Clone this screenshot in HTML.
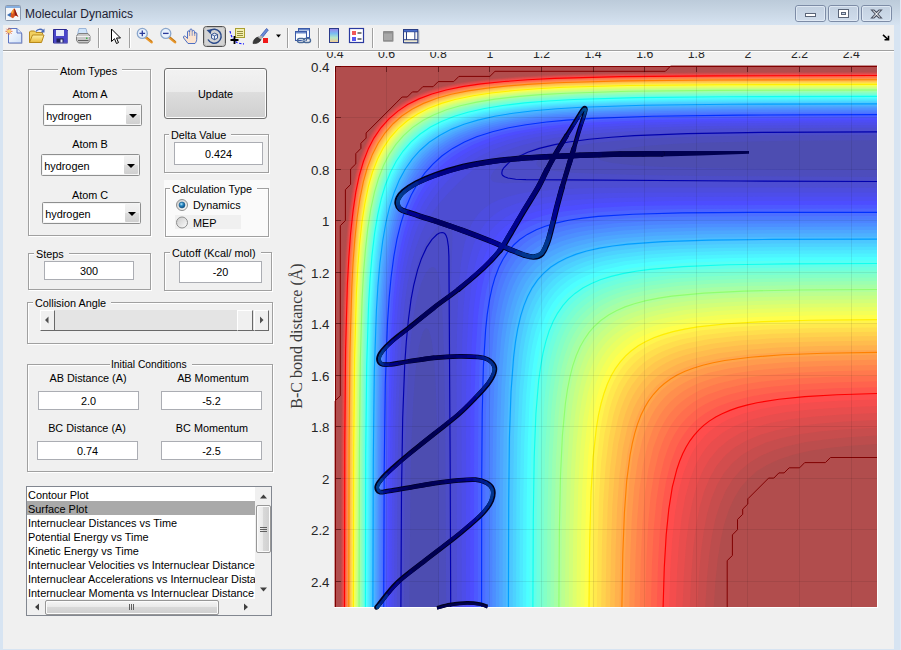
<!DOCTYPE html>
<html><head><meta charset="utf-8"><title>Molecular Dynamics</title>
<style>
*{box-sizing:border-box;margin:0;padding:0}
html,body{width:901px;height:650px;overflow:hidden;background:#d7e4f2}
body{position:relative;font-family:"Liberation Sans",sans-serif;font-size:10.85px;color:#000}
.abs{position:absolute}
#titlebar{position:absolute;left:0;top:0;width:901px;height:26px;background:linear-gradient(#bccbda 0,#c8d6e4 45%,#d7e4f2 100%)}
#title{position:absolute;left:25px;top:6.5px;font-size:12px;color:#222233;white-space:nowrap;letter-spacing:0}
#client{position:absolute;left:3px;top:25px;width:891px;height:624px;background:#f0f0f0}
#tbline{position:absolute;left:3px;top:50px;width:891px;height:1px;background:#a0a0a0}
.cap{position:absolute;top:6px;height:15px;border:1px solid #7c8ba3;border-radius:3px;background:linear-gradient(#dbe6f4,#c3d3e8 50%,#b7c9e2 51%,#cfdcee);box-shadow:inset 0 0 0 1px rgba(255,255,255,.55)}
.panel{position:absolute;border:1px solid #a0a0a0;box-shadow:1px 1px 0 #fff, inset 1px 1px 0 #fff}
.ptitle{position:absolute;top:-6px;background:#f0f0f0;padding:0 5px 0 2px;white-space:nowrap;line-height:12px;height:12px}
.lbl{position:absolute;white-space:nowrap;line-height:12px;height:12px;text-align:center}
.edit{position:absolute;background:#fff;border:1px solid #abadb3;text-align:center;white-space:nowrap}
.combo{position:absolute;background:#fff;border:1px solid #8e8f8f;border-radius:1.5px;box-shadow:inset 0 0 0 1px #f4f4f4}
.combo span{position:absolute;left:2.2px;top:5px;font-size:10.9px;line-height:13px}
.combo i{position:absolute;right:1px;top:1px;bottom:1px;width:14px;background:linear-gradient(#f2f2f2,#ebebeb 49%,#dddddd 50%,#cfcfcf);border-radius:1px}
.combo i:after{content:"";position:absolute;left:3px;top:8px;border:4px solid transparent;border-top:4px solid #000;border-bottom:0}
.sb{background:#f0f0f0;border-top:1px solid #fff;border-left:1px solid #fff;border-right:1px solid #696969;border-bottom:1px solid #696969}
#list div{height:14px;line-height:16px;padding-left:1px;white-space:nowrap;overflow:hidden;font-size:10.92px}
.xt .tk{font-size:12.3px}
.tk{font-size:13.33px;color:#262626;line-height:14px;height:14px;white-space:nowrap}
</style></head><body>
<div id="titlebar"></div>
<div id="title">Molecular Dynamics</div>

<div class="abs" style="left:900px;top:0;width:1px;height:650px;background:#e0e9f5"></div>
<div id="client"></div>
<div id="tbline"></div><div class="abs" style="left:3px;top:51px;width:891px;height:1px;background:#fff"></div>
<svg class="abs" style="left:0;top:0" width="901" height="51" viewBox="0 0 901 51">
<defs>
<linearGradient id="pg" x1="0" y1="0" x2="1" y2="1"><stop offset="0" stop-color="#ffffff"/><stop offset="1" stop-color="#cfe0f7"/></linearGradient>
<linearGradient id="fg" x1="0" y1="0" x2="0" y2="1"><stop offset="0" stop-color="#fff3a8"/><stop offset="1" stop-color="#e8b93a"/></linearGradient>
<linearGradient id="cbg" x1="0" y1="0" x2="0" y2="1"><stop offset="0" stop-color="#9a80e6"/><stop offset=".35" stop-color="#78bcf2"/><stop offset=".65" stop-color="#b4e6c8"/><stop offset="1" stop-color="#f8c890"/></linearGradient>
<linearGradient id="capg" x1="0" y1="0" x2="0" y2="1"><stop offset="0" stop-color="#c2d0e0"/><stop offset="1" stop-color="#d0ddec"/></linearGradient>
</defs>
<!-- matlab logo -->
<rect x="5.500" y="5.500" width="15" height="15" rx="1" fill="#f4f6f9" stroke="#8c9bb0"/>
<rect x="6" y="6" width="14" height="2" fill="#86aede"/>
<path d="M7 15l4-2.500 2 1.500-2.500 3z" fill="#3a6fb5"/><path d="M11 12.500c1.500-1.500 2.200-4 3.200-4s2 5 4.300 8.500c-1.500-.8-2.500-2-3.500-1l-2 2.200-2.500-1.200z" fill="#d8541e"/><path d="M14.200 8.500c1 0 2 5 4.300 8.500-1.500-.8-2.500-2-3.500-1z" fill="#8e1b12"/><path d="M11 12.500c1.500-1.500 2.200-4 3.200-4-.5 1.500-.7 4-1.200 5.500z" fill="#f2a23a"/>
<!-- caption buttons -->
<g stroke="#7d8ca6" fill="url(#capg)"><rect x="795.500" y="5.500" width="30" height="16" rx="2.500"/><rect x="828.500" y="5.500" width="30" height="16" rx="2.500"/><rect x="861.500" y="5.500" width="30" height="16" rx="2.500"/></g>
<g stroke="#e4ecf6" fill="none" stroke-opacity=".8"><rect x="796.500" y="6.500" width="28" height="14" rx="1.500"/><rect x="829.500" y="6.500" width="28" height="14" rx="1.500"/><rect x="862.500" y="6.500" width="28" height="14" rx="1.500"/></g>
<rect x="805.500" y="13.500" width="10" height="3" fill="#fff" stroke="#5a6578"/>
<rect x="838.500" y="9.500" width="10" height="8" fill="#fff" stroke="#5a6578"/><rect x="841.500" y="12.500" width="4" height="2" fill="#c4d3e8" stroke="#5a6578"/>
<path d="M871.500 10l2.500 0 2.500 2.500 2.500-2.500 2.500 0-3.700 4 3.700 4-2.500 0-2.500-2.500-2.500 2.500-2.500 0 3.700-4z" fill="#fff" stroke="#4a5060" stroke-width="1.1"/>
<!-- new -->
<path d="M8.500 28.500h8.500l4.500 4.500v10h-13z" fill="url(#pg)" stroke="#5b74c4"/><path d="M17 28.500v4.500h4.500" fill="#dfe9fa" stroke="#5b74c4"/><path d="M9.500 43.500h12.500v-10" fill="none" stroke="#9aa4c8"/>
<path d="M9 27.800v7M5.500 31.300h7M6.500 28.800l5 5M11.500 28.800l-5 5" stroke="#e8612c" stroke-width=".9"/><circle cx="9" cy="31.300" r="1.700" fill="#fbd36a"/>
<!-- open -->
<path d="M29.500 42.500v-10.500l1-1h4l1.500 1.500h6.500v2" fill="#f2d060" stroke="#b8891a"/><path d="M29.500 42.500l3-7.500h11.500l-2.500 7.500z" fill="url(#fg)" stroke="#b8891a"/><path d="M36 31.500c1.500-2.500 5-3 7-1" fill="none" stroke="#4a6ab8" stroke-width="1.300"/><path d="M44.500 28.500v4h-4z" fill="#4a6ab8"/>
<!-- save -->
<path d="M53.500 29.500h13l1 1v12.500h-14z" fill="#4a46c8" stroke="#2a2890"/><rect x="56" y="30" width="8" height="6" fill="#e8ecf8"/><rect x="56.500" y="38.500" width="7" height="4.500" fill="#20205a"/><rect x="60.500" y="39.500" width="2" height="3" fill="#e8ecf8"/><path d="M67.500 31v12h-13.500" fill="none" stroke="#8a88d8" stroke-opacity=".6"/>
<!-- print -->
<path d="M79 28.500h7l1.500 6h-10z" fill="#cfe4fa" stroke="#8aa8d0" stroke-width=".8"/><path d="M76.500 36l2-2.500h9.500l2 2.500v4.500l-2 2.500h-9.500l-2-2.500z" fill="#c8c8c8" stroke="#808080"/><path d="M76.500 36.500h13.500" stroke="#f0f0f0"/><path d="M78 40.500h10.500" stroke="#606060"/><path d="M78.500 42.500h9.500" stroke="#909090"/><rect x="86" y="37.500" width="1.500" height="1.500" fill="#3cb44a"/>
<!-- separators -->
<path d="M98.500 28v20M129.500 28v20M287.500 28v20M318.500 28v20M372.500 28v20" stroke="#a0a0a0"/><path d="M99.500 28v20M130.500 28v20M288.500 28v20M319.500 28v20M373.500 28v20" stroke="#ffffff"/>
<!-- cursor -->
<path d="M111.500 29v12.500l3-2.800 2 4.800 2-.9-2-4.600h4z" fill="#fff" stroke="#000" stroke-linejoin="round"/>
<!-- zoom in -->
<path d="M146 37.500l5.500 4.500" stroke="#e8962a" stroke-width="2.800" stroke-linecap="round"/><path d="M146.500 37l5.500 4.500" stroke="#a86a18" stroke-width=".7"/>
<circle cx="142.300" cy="33.400" r="5" fill="#e8f1fc" stroke="#8aa6cc" stroke-width="1.300"/><path d="M139.500 33.400h5.600M142.300 30.600v5.600" stroke="#2a3a9a" stroke-width="1.300"/>
<!-- zoom out -->
<path d="M169.500 37.500l5.500 4.500" stroke="#e8962a" stroke-width="2.800" stroke-linecap="round"/><path d="M170 37l5.500 4.500" stroke="#a86a18" stroke-width=".7"/>
<circle cx="165.800" cy="33.400" r="5" fill="#e8f1fc" stroke="#8aa6cc" stroke-width="1.300"/><path d="M163 33.400h5.600" stroke="#2a3a9a" stroke-width="1.300"/>
<!-- hand -->
<path d="M188 43.500l-4.300-5.500c-1-1.500.7-2.700 1.900-1.500l1.900 2v-6.500c0-1.500 2-1.500 2.100 0l.3-2c.2-1.500 2.200-1.400 2.200.1l.2 1.300c.3-1.400 2.300-1.200 2.300.3l.1 1.700c.4-1.300 2.200-1 2.200.4l-.2 5.700c-.1 2-1 3-1.700 4z" fill="#fbe3cf" stroke="#3a62c0" stroke-width=".9" stroke-linejoin="round"/><path d="M189.600 32v4M192.200 31.500v4.300M194.700 32.500v3.500" stroke="#3a62c0" stroke-width=".6"/>
<!-- rotate (pressed) -->
<rect x="203.500" y="26.500" width="22" height="20" rx="3" fill="#d4d4d4" stroke="#505050"/><rect x="204.500" y="27.500" width="20" height="18" rx="2" fill="none" stroke="#bdbdbd"/>
<path d="M209.500 31a7 7 0 1 1 -1.500 8.500" fill="none" stroke="#2a4a8a" stroke-width="1.500"/><path d="M206.500 30l5.200-.8-1 5z" fill="#2a4a8a"/>
<path d="M211.500 34.500l3-1.300 3 1.300v3.700l-3 1.500-3-1.500z" fill="#e8eef8" stroke="#2a4a8a" stroke-width=".9"/><path d="M211.500 34.500l3 1.400 3-1.400M214.500 35.900v3.800" fill="none" stroke="#2a4a8a" stroke-width=".8"/>
<!-- data cursor -->
<rect x="235.500" y="28.500" width="9" height="9" fill="#f3efb0" stroke="#a8a030"/><path d="M237 31.500h6M237 33.500h6M237 35.500h6" stroke="#807820" stroke-width=".8"/>
<path d="M230 31c1 5 3 9 7 11.500 2 1 4 1.300 7 1.300" fill="none" stroke="#1a1aff" stroke-width="1.200" stroke-dasharray="2.500 1.500"/>
<path d="M234.500 36v8M230.500 40h8" stroke="#000" stroke-width="1.800"/>
<!-- brush -->
<path d="M260 36.500l6.500-8 1.800 1.500-6.300 8z" fill="#6a8ad8" stroke="#3a5ab0" stroke-width=".8"/><path d="M253 43.500c0-3 2-6 5.500-6.500l2.500 2c-.5 3-4 5-8 4.500z" fill="#3a3a3a" stroke="#202020" stroke-width=".6"/><path d="M258 37.500l3-2 2 1.600-2 2.400z" fill="#b0b0b0"/>
<rect x="263" y="38" width="5" height="5" fill="#f01818"/>
<path d="M276 34.500h5l-2.500 3z" fill="#000"/>
<!-- link -->
<rect x="298.500" y="28.500" width="11" height="9" fill="#f4f8ff" stroke="#3a5aa8"/><rect x="299" y="29" width="10" height="1.500" fill="#6a88c8"/>
<rect x="295.500" y="31.500" width="11" height="9" fill="#fafcff" stroke="#3a5aa8"/><rect x="296" y="32" width="10" height="1.500" fill="#6a88c8"/>
<rect x="297.500" y="38.500" width="7" height="4" rx="2" fill="none" stroke="#4a6a98" stroke-width="1.400"/><rect x="303.500" y="38.500" width="7" height="4" rx="2" fill="none" stroke="#4a6a98" stroke-width="1.400"/><path d="M301.500 40.500h5" stroke="#8aa0c0" stroke-width="1.200"/>
<!-- colorbar -->
<rect x="329.500" y="28.500" width="9" height="14" fill="url(#cbg)" stroke="#2a3a8a"/>
<!-- legend -->
<rect x="349.500" y="28.500" width="14" height="14" fill="#fff" stroke="#2a3aa0" stroke-width="1.200"/><rect x="352" y="31" width="4" height="4" fill="#f05858"/><rect x="352" y="37" width="4" height="4" fill="#5858f0"/><path d="M357.500 33h4M357.500 39h4" stroke="#000" stroke-width="1.200"/>
<!-- gray square -->
<rect x="383" y="31" width="10.500" height="10.800" rx=".8" fill="#8e8e8e"/><rect x="384" y="33.500" width="8" height="6.500" fill="#a8a8a8"/>
<!-- plot tools -->
<rect x="404.500" y="30.500" width="15" height="13.500" fill="#9aa0a8" opacity=".6"/>
<rect x="403" y="29" width="15.300" height="14.200" fill="#2a3f85"/><rect x="404" y="30" width="13.300" height="1.600" fill="#4a6cc8"/>
<rect x="407" y="32.200" width="7.300" height="7" fill="#fff"/><rect x="404" y="32.200" width="2" height="7" fill="#f4f4f4"/><rect x="415.300" y="32.200" width="2" height="7" fill="#f4f4f4"/>
<rect x="404" y="40.200" width="13.300" height="2" fill="#ece8d0"/>
<!-- dock arrow -->
<path d="M883 34.800l4.500 4.200M884.500 39.700h4v-4" fill="none" stroke="#000" stroke-width="1.600"/>
</svg>

<!-- Atom Types -->
<div class="panel" style="left:28px;top:69px;width:123px;height:167px"><div class="ptitle" style="left:29px;top:-5px">Atom Types</div></div>
<div class="lbl" style="left:40px;top:88px;width:100px">Atom A</div>
<div class="combo" style="left:43px;top:104px;width:99px;height:22px"><span>hydrogen</span><i></i></div>
<div class="lbl" style="left:40px;top:138px;width:100px">Atom B</div>
<div class="combo" style="left:41px;top:154px;width:99px;height:22px"><span>hydrogen</span><i></i></div>
<div class="lbl" style="left:40px;top:189px;width:100px">Atom C</div>
<div class="combo" style="left:42px;top:202px;width:99px;height:22px"><span>hydrogen</span><i></i></div>
<!-- Update -->
<div class="abs" style="left:164px;top:68px;width:103px;height:51px;border:1px solid #707070;border-radius:3px;background:linear-gradient(#f2f2f2,#ebebeb 47%,#dddddd 48%,#cfcfcf);box-shadow:inset 0 0 0 1px #fcfcfc"><div class="lbl" style="left:0;right:0;top:19px">Update</div></div>
<!-- Delta -->
<div class="panel" style="left:164px;top:134px;width:105px;height:39px"><div class="ptitle" style="left:4px">Delta Value</div></div>
<div class="edit" style="left:174px;top:142px;width:89px;height:23px;line-height:23px">0.424</div>
<!-- Calc type -->
<div class="abs" style="left:164px;top:180px;width:106px;height:58px;background:#fafafa"></div>
<div class="panel" style="left:165px;top:188px;width:104px;height:49px"><div class="ptitle" style="left:4px;background:#fafafa">Calculation Type</div></div>
<div class="abs" style="left:175px;top:215px;width:66px;height:14px;background:#f0f0f0"></div>
<svg class="abs" style="left:175px;top:198px" width="14" height="32" viewBox="0 0 14 32">
<defs><radialGradient id="rg" cx="40%" cy="35%" r="60%"><stop offset="0" stop-color="#bfe6f7"/><stop offset=".45" stop-color="#2f8fc8"/><stop offset="1" stop-color="#0b4f86"/></radialGradient>
<linearGradient id="rbg" x1="0" y1="0" x2="1" y2="1"><stop offset="0" stop-color="#c8c8c8"/><stop offset="1" stop-color="#fdfdfd"/></linearGradient></defs>
<circle cx="7" cy="7" r="5.5" fill="url(#rbg)" stroke="#8e8f8f"/><circle cx="7" cy="7" r="3" fill="url(#rg)" stroke="#1f5f8f" stroke-width=".6"/>
<circle cx="7" cy="24.5" r="5.5" fill="url(#rbg)" stroke="#8e8f8f"/>
</svg>
<div class="lbl" style="left:193px;top:199px;text-align:left">Dynamics</div>
<div class="lbl" style="left:193px;top:217px;text-align:left">MEP</div>
<!-- Steps -->
<div class="panel" style="left:28px;top:253px;width:123px;height:37px"><div class="ptitle" style="left:5px">Steps</div></div>
<div class="edit" style="left:44px;top:261px;width:90px;height:19px;line-height:19px">300</div>
<!-- Cutoff -->
<div class="panel" style="left:164px;top:252px;width:108px;height:39px"><div class="ptitle" style="left:5px">Cutoff (Kcal/ mol)</div></div>
<div class="edit" style="left:179px;top:261px;width:83px;height:22px;line-height:20.5px">-20</div>
<!-- Collision angle -->
<div class="panel" style="left:27px;top:302px;width:246px;height:42px"><div class="ptitle" style="left:5px">Collision Angle</div></div>
<div class="abs" style="left:40px;top:310px;width:229px;height:21px;background:#e4e4e4;border-bottom:1px solid #696969"></div>
<div class="abs sb" style="left:40px;top:310px;width:15px;height:21px"></div>
<div class="abs sb" style="left:237px;top:310px;width:16px;height:21px"></div>
<div class="abs sb" style="left:254px;top:310px;width:15px;height:21px"></div>
<svg class="abs" style="left:40px;top:310px" width="231" height="21"><path d="M8.500 6.500v7l-3.500-3.500z M220 6.500v7l3.500-3.500z" fill="#505050"/></svg>
<!-- Initial Conditions -->
<div class="panel" style="left:27px;top:364px;width:246px;height:108px"><div class="ptitle" style="left:82px;top:-6px;font-size:10.3px;padding:0 5px 0 1px">Initial Conditions</div></div>
<div class="lbl" style="left:33px;top:372px;width:110px">AB Distance (A)</div>
<div class="lbl" style="left:158px;top:372px;width:110px">AB Momentum</div>
<div class="edit" style="left:38px;top:391px;width:101px;height:19px;line-height:19px">2.0</div>
<div class="edit" style="left:161px;top:391px;width:101px;height:19px;line-height:19px">-5.2</div>
<div class="lbl" style="left:32px;top:422px;width:110px">BC Distance (A)</div>
<div class="lbl" style="left:157px;top:422px;width:110px">BC Momentum</div>
<div class="edit" style="left:37px;top:441px;width:101px;height:19px;line-height:19px">0.74</div>
<div class="edit" style="left:161px;top:441px;width:101px;height:19px;line-height:19px">-2.5</div>
<!-- Listbox -->
<div id="list" class="abs" style="left:26px;top:486px;width:246px;height:130px;background:#fff;border:1px solid #828790;overflow:hidden">
<div class="abs" style="left:0px;top:14px;width:228px;height:14px;background:#a9a9a9"></div>
<div style="margin-top:0px;position:relative;width:228px">Contour Plot</div><div style="position:relative;width:228px">Surface Plot</div><div style="width:228px">Internuclear Distances vs Time</div><div style="width:228px">Potential Energy vs Time</div><div style="width:228px">Kinetic Energy vs Time</div><div style="width:228px">Internuclear Velocities vs Internuclear Distance</div><div style="width:228px">Internuclear Accelerations vs Internuclear Distance</div><div style="width:228px">Internuclear Momenta vs Internuclear Distance</div>
<div class="abs" style="left:228px;top:0;width:17px;height:112px;background:#f0f0f0"></div>
<div class="abs" style="left:0;top:112px;width:245px;height:17px;background:#f0f0f0"></div>
<div class="abs" style="left:229px;top:18px;width:15px;height:48px;border:1px solid #979797;border-radius:2px;background:linear-gradient(90deg,#f5f5f5,#e8e8e8 49%,#d8d8d8 50%,#cfcfcf);box-shadow:inset 0 0 0 1px #fbfbfb"></div>
<div class="abs" style="left:18px;top:113px;width:174px;height:15px;border:1px solid #979797;border-radius:2px;background:linear-gradient(#f5f5f5,#e8e8e8 49%,#d8d8d8 50%,#cfcfcf);box-shadow:inset 0 0 0 1px #fbfbfb"></div>
<svg class="abs" style="left:0;top:0" width="245" height="129"><path d="M233 11.5l3.5-4 3.5 4z M233 100.5l3.500 4 3.500-4z M12 116.500l-4 3.500 4 3.500z M217 116.500l4 3.500-4 3.500z" fill="#404040"/><path d="M233 40.500h7M233 42.500h7M233 44.500h7 M102.500 117v6M104.500 117v6M106.500 117v6" stroke="#606060" fill="none"/></svg>
</div>

<div class="abs" style="left:334px;top:66px;width:544px;height:542px;background:#fff"></div>
<svg class="abs" style="left:335px;top:66px" width="542" height="541" viewBox="0 0 542 541" overflow="visible">
<rect x="0" y="0" width="542" height="541" fill="#b14d4d"/>
<path fill="#bc4d4d" d="M334.1 6.4L542 5.8L542 378.1L514.9 379.8L493 382.1L473.8 385.1L458.1 388.7L443.9 393.4L432.3 398.7L422 405.1L413 412.9L405.2 422.1L398.8 432.8L393.6 444.4L389.1 458.6L385.7 474L382.7 493.3L380.4 515.2L378.8 541L5.8 541L6 377.4L7.1 270.5L8.5 217.7L9.9 190.6L11.2 171.3L13.8 144.3L16.3 126.2L19 112.1L21.5 101.8L25.5 88.9L29.2 79.9L35.9 67L42.6 57.5L50.3 48.8L59.4 41.1L67.1 35.9L80 29.1L89 25.5L101.9 21.5L112.3 19L126.5 16.3L144.5 13.8L171.6 11.2L191 9.8L218.1 8.5L258.1 7.3Z"/>
<path fill="#c74d4d" d="M515.2 6.4L542 6.4L542 369.6L513.6 371.3L490.4 373.4L471 376.1L453 379.9L438.8 384.2L425.9 389.8L414.4 396.7L405.3 404.5L397.5 413.6L390.5 425.1L385 438L380.6 452.1L376.8 470.2L374.1 489.5L371.9 512.7L370.3 541L6.4 541L6.7 373.5L7.6 278.2L9.4 213.8L12.4 164.9L14.7 143L17.5 123.7L20.6 108.1L24.5 94.1L29.4 81.2L34.8 70.3L41.3 60.4L48.7 51.5L57.1 43.8L67.1 36.7L77.9 30.9L90.5 25.8L104.5 21.5L120 18.1L138.1 15.3L160 12.9L210.3 9.5L276.2 7.6L365.2 6.8Z"/>
<path fill="#d24d4d" d="M303.7 7.7L542 6.9L542 361.7L511.3 363.2L486.5 365.3L464.6 368.3L446.5 372L431 376.6L418.1 382.2L406.8 389L397.5 397L389 407L382.2 418.6L376.8 431.6L372.3 447L368.8 465L366 485.6L363.9 510.4L362.4 541L6.9 541L7.7 303.1L9 239.6L11 191.9L14.4 150.7L16.8 131.9L19.4 116.9L22.2 104.3L25.8 92.4L29.7 82.3L34.8 71.8L41.1 61.8L47.4 54.1L55.2 46.4L63.5 39.9L73.6 33.9L83.9 29L95.5 24.8L108.4 21.2L123.9 18.1L140.7 15.6L160 13.4L182.8 11.6L234.9 9.1Z"/>
<path fill="#de4d4d" d="M371.7 7.7L542 7.4L542 354.1L509.7 355.6L482.6 357.7L459.4 360.6L441.3 364.2L425.9 368.6L411.7 374.4L400 381.3L394.9 385.3L389.7 390.1L385 395.4L381.1 400.6L374.5 412.2L369.1 425.5L364.5 441.8L360.9 461.1L358.2 483L356.2 510.1L354.8 541L7.4 541L7.7 385.1L8.3 296.3L9.7 231.9L12.1 182.9L14 159.7L16.2 140.4L19 122.4L21.9 108.2L25.5 95.3L29.7 84.1L34.8 73.4L40.2 64.4L47.2 55.4L54.9 47.7L63.2 41.1L73.4 34.8L84.2 29.6L96.8 25.1L109.7 21.6L125.2 18.5L143.2 15.8L163.9 13.6L188.4 11.8L215.5 10.4L278.7 8.6Z"/>
<path fill="#e94d4d" d="M284.8 9L378.1 8.2L542 7.9L542 347L507.2 348.4L479.5 350.4L455.5 353.2L436.2 356.8L419.4 361.4L405.3 367.1L393.6 374L383.3 382.6L374.6 392.9L367.8 404.6L362.1 418.6L357.4 435.4L353.8 454.7L351 478.6L349 506.2L347.6 541L8 541L8.8 305.3L9.9 243.5L11.9 195.8L15.3 153.3L17.3 136.5L19.8 121.1L22.6 108.2L25.8 96.6L30.1 85L34.8 74.8L40.3 65.7L47.1 56.7L54.2 49.3L62.5 42.5L72.3 36.2L82.6 31.1L93 27L105.8 23.2L118.7 20.3L134.2 17.7L152.3 15.4L174.2 13.3L223.3 10.6Z"/>
<path fill="#f44d4d" d="M330.7 9L542 8.5L542 340.1L505.9 341.4L476.2 343.4L451.7 346.1L432.3 349.5L414.2 354.2L400 359.7L393.3 363.2L387.1 367.1L376.8 375.6L371.7 381.3L367.8 386.4L361 398L354.9 413.4L350.4 430.2L346.7 450.8L344 475.3L342.1 504.9L340.7 541L8.5 541L8.7 389L9.3 301.4L10.6 237L12.9 188.1L16.8 145.3L19.3 127.5L21.9 113.9L25 101.8L28.8 90.2L33.6 79L38.7 69.6L44.9 60.5L51.7 52.8L60.4 45.1L69.7 38.6L80 33.1L91.4 28.3L103.2 24.6L116.1 21.5L131.6 18.7L149.7 16.3L171 14.2L194.9 12.5L250.4 10.3Z"/>
<path fill="#ff4d4d" d="M493.3 9L542 9L542 333.5L503.3 334.8L472.3 336.8L446.5 339.5L425.9 343L407.8 347.8L393.6 353.3L386.9 356.8L380.7 360.7L375.5 364.5L369.9 369.7L361.3 380L357.5 386.1L354 392.9L348 408.3L343.4 426.4L340 447L337.3 472.7L335.4 502.4L334.2 541L9 541L9.3 377.4L10.1 284.7L11.8 220.3L14.8 170L16.9 149.4L19.5 130.1L22.7 113.4L26.5 99.2L31.1 86.3L36.6 74.7L43 64.4L50.3 55.4L58.4 47.7L68.4 40.3L78.7 34.5L90.3 29.5L103.2 25.3L117.4 21.9L135.5 18.7L156.1 16.2L178.2 14.2L202.6 12.6L265.8 10.4L351 9.4Z"/>
<path fill="#ff584d" d="M308.1 10.3L542 9.5L542 327.2L502 328.4L469.7 330.3L443.9 332.9L422 336.4L403.9 340.9L388.4 346.7L381.1 350.4L374.9 354.2L369.1 358.6L363.9 363.2L359.2 368.4L354.9 374.2L351 380.4L347.3 387.7L341.5 403.2L337 421.2L333.5 443.1L330.9 468.9L329.1 501.1L327.8 541L9.5 541L10.3 306.6L11.6 242.2L13.6 194.5L17.1 153.3L19.4 135.4L21.9 120.4L24.7 108.2L28.4 95.6L32.4 85L37.5 74.7L43.9 64.6L50.3 56.7L58.1 49L66.5 42.5L76.1 36.7L86.5 31.8L98.1 27.6L111 24L126.5 20.8L143.2 18.3L163.9 16L185.8 14.2L238.7 11.7Z"/>
<path fill="#ff634d" d="M386.3 10.3L542 10.1L542 321.2L500.7 322.3L467.2 324.1L440.1 326.6L418.1 330L398.8 334.7L383.3 340.3L376 343.9L369.6 347.8L363.9 351.9L358.4 356.8L353.6 362L348.8 368.4L344.8 374.8L341.5 381.3L335.5 397.2L330.9 416.1L327.4 438L324.8 465L323 498.5L321.8 541L10.1 541L10.3 385.6L11 296.3L12.5 231.9L15 182.9L16.8 161.9L19.1 141.7L21.7 124.9L24.7 110.8L28.4 97.9L32.7 86.3L37.7 76L44.1 65.7L51.3 56.7L59.4 49L68.4 42.2L78.7 36.2L90.3 31.1L102.2 27L116.1 23.5L131.5 20.6L150.2 18L171.6 15.9L222 12.8L287.8 11.1Z"/>
<path fill="#ff6e4d" d="M293.6 11.6L384.6 10.9L542 10.6L542 315.3L498.1 316.4L464.1 318.2L436.2 320.7L413 324.1L393.6 328.7L384.6 331.7L376.8 334.9L369.1 338.8L362.9 342.6L357.5 346.7L352.3 351.4L347.4 356.8L343.3 362.2L339.4 368.4L335.5 376.1L332.3 383.9L329.3 392.9L324.7 412.2L321.3 435.4L318.7 463.3L317 497.2L315.9 541L10.6 541L11.4 307.9L12.6 244.7L14.6 198.4L18.1 155.4L20.5 136.5L22.9 122.4L25.8 109.4L29.2 97.9L33.5 86.3L37.9 77.3L43.9 67.4L50.1 59.3L57.7 51.5L65.8 45L75.8 38.6L86.4 33.5L96.8 29.5L109.6 25.8L123.9 22.6L139.4 20.1L157.4 17.8L179.4 15.9L229.7 13.1Z"/>
<path fill="#ff794d" d="M350.2 11.6L542 11.2L542 309.7L496.8 310.7L460.7 312.5L432.3 314.9L409.1 318.2L389.7 322.7L372.9 328.5L365.2 332.3L358.8 336.1L352.3 340.8L347.1 345.4L342 351L337.6 356.8L333.6 363.2L329.7 371L326.5 378.9L323.6 387.7L319.1 407L315.6 430.2L313 459.8L311.3 495.9L310.3 541L11.2 541L11.4 390.3L12.1 302.7L13.4 239.6L15.7 190.6L19.4 149.4L21.9 131.6L25 115.9L28.4 102.8L32.3 91.4L37.4 79.9L42.6 70.8L49.1 61.8L56.8 53.5L65.3 46.4L74.8 40.1L85.4 34.8L96.8 30.3L109.7 26.5L123.9 23.3L140.7 20.6L161.3 18.1L207.8 14.7L265.8 12.7Z"/>
<path fill="#ff844d" d="M283.8 12.9L376.8 12L542 11.7L542 304.2L494.3 305.3L456.8 307L427.1 309.5L402.8 313L383.3 317.6L374.2 320.5L366.5 323.6L359.2 327.2L352.3 331.4L345.9 336.2L340.7 341L335.8 346.5L331.7 352.1L327.8 358.5L323.9 366.4L318.1 382.6L313.4 403.2L309.9 427.6L307.5 457.3L305.8 493.3L304.8 541L11.7 541L12.5 310.4L13.7 248.6L15.6 200.9L19 158.4L21.1 141.7L23.6 126.2L26.3 113.4L29.7 101.1L33.6 90.2L38.3 79.9L43.9 70.3L50.2 61.8L57.4 54.1L65 47.7L74.6 41.2L83.9 36.3L94.2 32L107.1 27.9L121.3 24.5L136.1 21.9L154.9 19.4L174.2 17.5L222 14.6Z"/>
<path fill="#ff8f4d" d="M330.6 12.9L542 12.3L542 298.9L491.7 300L454.2 301.6L423.3 304.1L398.8 307.6L378.1 312.3L369.1 315.2L361.3 318.3L353.8 322L347.1 326.1L340.7 330.9L335.5 335.7L330.5 341.3L325.8 347.8L322 354.2L318.3 362L312.5 378.7L307.9 399.3L304.5 423.8L302.1 454.7L300.5 492.1L299.5 541L12.3 541L12.5 391.6L13.2 304L14.5 240.9L16.8 192.2L20.6 150L23.1 132.7L25.8 118.7L29.1 105.6L32.9 94L37.4 83.5L42.6 73.9L49 64.6L55.5 57.2L63.2 50.1L72.3 43.6L81.3 38.5L92.9 33.4L105.8 29.1L120 25.5L135.5 22.7L153.6 20.2L175.3 18L197.4 16.4L251.6 14.2Z"/>
<path fill="#ff9b4d" d="M510 12.9L542 12.9L542 293.8L490.4 294.8L451.7 296.3L420.7 298.7L394.9 302.2L374.2 306.8L365.2 309.7L356.6 313L348.8 316.9L342.4 320.7L335.5 325.8L330.4 330.6L325.4 336.2L320.7 342.6L316.9 349.1L313.2 356.8L309.8 365.8L307.1 374.5L302.6 395.4L299.2 421.2L296.8 452.1L295.3 490.8L294.3 541L12.9 541L13.2 380L14 287.2L15.8 222.8L18.8 173.9L21.1 152L23.9 132.7L27.1 116.3L31 102.1L35.9 88.9L41.3 77.8L47.7 67.7L54.7 59.3L62.9 51.5L72.3 44.6L82.8 38.6L95.5 33.2L108.4 29.1L123.9 25.5L143.2 22.2L163.9 19.7L185.8 17.8L211.6 16.3L274.9 14.2L362.6 13.2Z"/>
<path fill="#ffa64d" d="M319 14.2L542 13.5L542 288.8L490.4 289.7L450.4 291.2L418.1 293.6L392.3 296.9L370.9 301.4L353.6 307.2L345.8 310.8L338.1 315.3L332.3 319.4L326.4 324.6L321.3 330.1L316.2 337L312.1 343.9L308.4 351.5L304.9 360.7L302.1 369.7L297.6 390.3L294.2 416.1L291.8 448.3L290.3 488.2L289.3 541L13.5 541L13.7 394.2L14.3 306.6L15.6 244.7L17.8 195.8L21.4 154.6L23.7 137.8L26.5 122.4L29.7 109.2L33.6 96.9L37.4 87.4L42.6 77.3L48.4 68.3L55.5 59.7L63.2 52.4L72.3 45.7L82.2 39.9L93.7 34.8L104.9 30.9L118.7 27.3L133.2 24.5L150.8 21.9L171.6 19.7L193.6 17.9L247.8 15.5Z"/>
<path fill="#ffb14d" d="M432.8 14.2L542 14L542 284L487.8 284.8L446.5 286.3L414.2 288.6L387.1 292.1L365.2 296.8L356.2 299.6L347.1 303.1L339.9 306.6L332.9 310.7L326.5 315.4L320.6 320.7L316 325.9L311 332.7L306.7 340.1L303.1 347.8L299.7 356.8L297 365.8L292.4 387.7L289.2 413.5L286.9 445.7L285.3 486.9L284.5 541L14.1 541L14.3 385.1L15.1 295L16.7 230.6L19.4 182.9L21.5 159.7L24 140.4L27 123.7L30.4 109.5L34.5 96.6L39.5 85L45.1 74.7L51.5 65.7L59.4 57.1L67.3 50.2L76.9 43.8L87.8 38.2L99.5 33.5L112.4 29.6L129 26L146.3 23.2L166.5 20.8L188.4 18.9L243.9 16.2L317.5 14.8Z"/>
<path fill="#ffbc4d" d="M312.5 15.5L542 14.6L542 279.2L485.2 280.1L442.6 281.6L410.4 283.9L383.4 287.2L361.3 291.9L352.3 294.6L343.3 298L336 301.4L329.1 305.4L322.6 310L316.3 315.6L311 321.4L306.8 327.2L302.2 334.9L298.5 342.6L295.1 351.7L292.4 360.7L287.8 382.7L284.4 409.6L282.1 441.8L280.6 484.3L279.7 541L14.7 541L14.9 394.2L15.5 307.9L16.8 246L19 197.1L22.7 155.9L25 139.1L27.8 123.7L31 110.4L34.8 98.2L38.7 88.6L43.8 78.6L49.7 69.6L56.8 61L64 54.1L72.5 47.7L81.3 42.3L91.7 37.4L103.2 33.1L117.4 29.2L134.2 25.8L151 23.3L170.3 21.1L192.3 19.3L243.9 16.8Z"/>
<path fill="#ffc74d" d="M407.5 15.5L542 15.3L542 274.6L483.9 275.4L441.3 276.8L407.8 279.1L380.7 282.3L357.5 287.1L348.2 289.8L339.4 293.1L331.7 296.6L323.9 301.1L318.1 305.3L312.2 310.4L307.1 315.9L302 322.9L297.9 329.8L294.2 337.5L290.7 346.5L287.8 356.2L283.1 378.7L279.7 405.8L277.4 439.2L276 481.7L275.1 541L15.3 541L15.6 389L16.3 298.8L17.8 234.4L20.4 186.8L22.4 164.9L24.7 145.6L27.5 128.8L31 113.5L34.8 100.7L39.6 88.9L44.9 78.6L50.9 69.6L58.5 60.5L67 52.8L76.1 46.4L86.5 40.7L98.1 35.8L111 31.7L125.2 28.2L142 25.3L161.3 22.7L183.2 20.7L233.6 17.8L302 16.2Z"/>
<path fill="#ffd24d" d="M309.9 16.7L542 15.9L542 270.1L482.6 270.9L438.8 272.3L403.9 274.5L376.8 277.7L353.6 282.4L343.3 285.4L335 288.5L326.6 292.4L319.9 296.3L312.8 301.4L307.1 306.5L302 312.2L296.8 319.3L292.9 326L289.1 334.3L286 342.6L282.9 352.9L278.3 376.1L275 403.2L272.8 438L271.4 481.7L270.6 541L15.9 541L16.8 309.3L18.1 246.4L20.1 200.9L23.5 161L25.8 143.4L28.6 127.5L31.9 113.4L35.4 101.8L39.9 90.2L44.5 81.2L50.3 71.9L57.4 63.1L65.4 55.4L73.6 49.2L82.6 43.7L93.2 38.6L104.5 34.4L117.4 30.8L132.9 27.5L149.7 24.9L169.1 22.6L191 20.8L242.6 18.2Z"/>
<path fill="#ffde4d" d="M399.7 16.7L542 16.5L542 265.7L481.3 266.4L436.2 267.8L401.3 270L374.2 273.1L351 277.5L340.7 280.4L331.7 283.7L323.7 287.2L316.2 291.4L309.3 296.3L303.3 301.5L297.5 307.9L292.8 314.3L288.3 322L284.7 329.8L281.4 338.8L278.4 349.1L273.8 372.3L270.5 400.6L268.3 435.4L266.9 480.5L266.2 541L16.5 541L16.8 390.3L17.6 300.1L19.1 235.7L21.7 188.1L23.7 166.2L26.1 146.8L28.9 130.1L32.3 115L36.1 102.2L40.3 91.5L45.5 81.2L51.6 71.7L58.7 63.1L66.9 55.4L76.1 48.6L86.5 42.7L98.1 37.6L110.5 33.5L125.2 29.9L140.7 27L158.8 24.5L180.7 22.3L231 19.3L298.1 17.6Z"/>
<path fill="#ffe94d" d="M310.7 18L397.5 17.4L542 17.2L542 261.4L478.8 262.1L433.6 263.4L397.5 265.7L369.1 268.9L345.8 273.4L335.5 276.4L326.5 279.7L318.4 283.4L311 287.6L304.6 292.3L298.6 297.6L292.9 303.8L288.2 310.4L283.9 317.8L280.2 325.9L276.9 334.9L274 345.2L269.4 368.4L266.1 396.7L263.9 432.8L262.6 477.9L261.9 541L17.2 541L18.1 310.4L19.4 247.7L21.4 202.2L24.8 162.3L27.1 145L29.9 128.8L33.2 114.6L36.8 103L41.3 91.6L45.9 82.4L51.6 73.4L58.9 64.4L66.9 56.7L74.8 50.6L83.9 45.1L94.7 39.9L105.8 35.8L118.7 32.2L134.2 28.9L151 26.2L170.3 24L192.3 22.1L243.9 19.5Z"/>
<path fill="#fff44d" d="M404.4 18L542 17.8L542 257.1L476.2 257.9L429.7 259.2L393.6 261.4L365.2 264.6L342 269.1L331.7 272L322.6 275.3L313.6 279.5L306.8 283.4L299.7 288.5L293.9 293.7L288.2 300.1L283.7 306.6L279.3 314.3L275.8 322L272.5 331L269.6 341.3L267.1 352.9L264.9 365.8L261.8 394.2L259.6 430.2L258.3 476.6L257.6 541L17.8 541L18.1 390.3L18.9 301.4L20.4 238.3L22.9 190.6L24.7 170L27.2 149.4L30 132.7L33.4 117.2L37.4 103.9L41.8 92.7L47 82.4L52.9 73.3L60.2 64.4L68.4 56.7L77.4 50L88.5 43.8L100.5 38.6L112.3 34.8L127.8 31L143.2 28.2L161.3 25.7L183.2 23.5L233.6 20.5L302 18.8Z"/>
<path fill="#ffff4d" d="M315.1 19.3L542 18.5L542 253L476.2 253.7L428.4 255L392.3 257L362.6 260.2L349.7 262.4L338.1 264.9L327.8 267.8L318.7 271L311 274.5L303.3 278.8L296.7 283.4L290.4 288.9L284.9 295L280 301.6L275.6 309.1L271.5 318.2L268.3 327.2L265.4 337.5L262.9 349.1L260.7 362L257.5 391.6L255.4 427.6L254.1 475.3L253.5 541L18.5 541L19.4 313L20.6 250.5L22.8 202.2L26.5 161L28.8 144.3L31.6 128.8L34.8 115.3L38.7 103L42.8 92.7L47.7 83.1L54 73.4L60.7 65.4L68.4 58L77 51.5L86.5 45.9L96.8 41.1L108.4 36.9L121.3 33.3L136.8 30.1L153.6 27.4L172.9 25.2L194.9 23.3L246.5 20.8Z"/>
<path fill="#f4ff58" d="M424.4 19.3L542 19.2L542 248.9L473.6 249.6L425.9 250.8L389.7 252.9L360 256L335.5 260.5L325.2 263.2L315.4 266.6L307.1 270.3L299.4 274.6L292.3 279.5L286.4 284.7L280.6 291.1L275.9 297.6L271.4 305.3L267.3 314.3L264.1 323.3L261.2 333.6L258.7 345.2L256.6 358.1L253.4 387.7L251.3 425.1L250.1 472.7L249.4 541L19.2 541L19.5 389L20.2 300.1L21.9 235.7L24.5 189.1L26.7 166.2L29.2 146.8L32.3 129.9L35.6 115.9L39.7 103L44.5 91.5L50.1 81.2L56.3 72.1L64.4 63.1L72.3 56.2L82.6 49.2L93 43.8L105.8 38.7L118.7 34.8L134.2 31.4L151 28.6L170.3 26.2L191 24.4L245.2 21.5L316.2 20Z"/>
<path fill="#e9ff63" d="M323.8 20.6L542 19.9L542 244.9L472.3 245.6L423.3 246.8L385.9 248.9L356.2 251.9L331.7 256.4L321.3 259.2L311 262.8L302.4 266.6L295.5 270.5L288.1 275.7L282.3 280.8L276.4 287.2L271.8 293.7L267.3 301.4L263.3 310.4L260.1 319.4L257.2 329.8L254.7 341.3L252.6 354.2L249.4 383.9L247.3 421.2L246 470.2L245.4 541L19.9 541L20.1 398L20.8 313L22.1 251.2L24.3 202.2L28.1 161L30.7 143L33.4 128.8L36.5 115.9L40.2 104.3L45 92.7L49.7 83.7L55.5 75L62.1 67L70.2 59.3L78.8 52.8L89 46.8L99.4 42.1L112.3 37.6L125.2 34.2L141.6 30.9L158.7 28.4L199.8 24.5L252.9 22Z"/>
<path fill="#deff6e" d="M480.8 20.6L542 20.6L542 241L471 241.6L420.7 242.8L382 244.9L352.3 248L327.7 252.5L317.5 255.2L307.1 258.8L298.2 262.8L290.4 267.3L283.9 271.9L277.5 277.7L272.3 283.5L267.1 290.8L263.3 297.7L259.3 306.6L255.7 316.9L252.9 327.1L248.4 351.7L245.4 381.3L243.3 419.9L242.1 470.2L241.5 541L20.6 541L20.9 386.4L21.7 296.3L23.4 234.4L26.4 185.5L28.4 164.9L31.1 145.6L34.6 127.5L38.3 113.4L42.6 100.8L48.1 88.9L54.2 78.6L61.2 69.6L69.7 61.1L78.8 54.1L89.6 47.7L101 42.5L113.6 38.2L129 34.2L146.8 30.9L165.7 28.3L187.1 26.2L211.6 24.5L269.7 22.2L349.7 21.1Z"/>
<path fill="#d2ff79" d="M338.9 21.9L542 21.3L542 237.1L469.7 237.7L419.4 238.9L380.7 240.9L349.7 243.9L325.2 248.3L314 251.2L304.6 254.4L295.5 258.3L287.8 262.5L280.1 267.9L274.2 273.1L268.4 279.5L263.8 286L259.4 293.7L255.3 302.7L251.8 313L249.1 323.1L246.6 334.9L244.6 347.8L241.4 378.7L239.4 417.3L238.2 467.6L237.6 541L21.3 541L21.6 398L22.2 313L23.5 251.2L25.8 203.2L27.5 181.6L29.7 161.6L32.2 144.3L34.9 130.1L38.5 115.9L42.3 104.3L46.6 94L52.2 83.7L58.4 74.7L65.8 66.2L73.6 59.3L82.7 52.8L91.9 47.7L103.8 42.5L116.1 38.4L130.8 34.8L145.8 31.9L163.9 29.4L185.8 27.1L207.8 25.5L262 23.2Z"/>
<path fill="#c7ff84" d="M296.1 23.2L387.1 22.3L542 22L542 233.3L476.2 233.8L428.4 234.7L391 236.2L361.8 238.3L336.8 241.4L316.2 245.7L299.4 251L291.6 254.4L285.2 257.9L277.5 263.1L269.7 269.9L263.6 276.9L258.1 285.2L253.1 295L249.2 305.3L245.8 316.9L242.8 331L240.6 345.2L238.7 362L236 403.2L234.5 458.6L233.8 541L22 541L22.9 316.9L24.1 256.3L26.2 210L29.7 168.7L32.1 150.7L34.8 135.2L37.7 122.4L41.3 110.2L45.2 99.9L49.8 90.2L55.5 80.6L61.9 72.1L69.3 64.4L77.1 58L86.5 51.8L95.5 47.1L106.7 42.5L118.9 38.6L134.2 35L149.7 32.2L167.8 29.8L185.8 27.9L233.6 24.9Z"/>
<path fill="#bcff8f" d="M365.3 23.2L542 22.8L542 229.6L473.6 230L425.9 230.9L388.4 232.3L358.8 234.5L332.9 237.7L312.3 241.9L295.5 247.3L287.8 250.7L281.3 254.2L273.6 259.4L265.8 266.2L259.4 273.7L253.9 282.1L249.1 291.8L245 302.7L241.7 314.3L238.8 328.5L236.5 343.9L234.7 360.7L232.1 401.9L230.7 457.3L230 541L22.8 541L23.1 395.4L23.8 310.4L25.2 248.6L27.6 200.9L29.6 177.8L31.7 159.7L34.3 143L37.4 127.6L41.3 113.5L45.2 102.7L50.3 91.5L55.6 82.4L62.3 73.4L69.7 65.7L78.7 58.2L87.8 52.4L98.1 47.1L109.8 42.5L122.7 38.6L139.4 34.9L156.1 32.1L176.8 29.6L222 26.3L280 24.3Z"/>
<path fill="#b1ff9b" d="M312.3 24.5L398.8 23.8L542 23.5L542 225.9L472.3 226.3L423.3 227.2L384.6 228.6L354.9 230.8L329.1 234L308.4 238.2L299.2 240.9L290.4 244.1L283.3 247.3L276.3 251.2L268.4 256.7L260.7 263.9L254.3 271.8L249.5 279.5L245.1 288.5L240.9 300.1L237.4 312.8L234.8 325.9L232.6 341.3L230.8 358.1L228.3 399.3L226.9 456L226.3 541L23.6 541L23.8 399.3L24.5 314.3L25.8 253.2L28 207.4L31.6 167.5L33.9 150.7L36.7 135.2L40 121.5L43.7 109.5L47.8 99.2L52.9 89.1L58.8 79.9L65.8 71.3L72.8 64.4L81.3 57.8L91.6 51.5L101.9 46.6L113.1 42.5L126.5 38.7L140.7 35.6L157.4 32.9L175.5 30.6L197.4 28.7L247.8 26Z"/>
<path fill="#a6ffa6" d="M422.2 24.5L542 24.3L542 222.2L471 222.6L422 223.4L383.3 224.8L352.3 227L326.5 230.1L305.1 234.4L287.8 240L280 243.4L272.8 247.3L265.4 252.5L258.1 259L251.6 266.6L245.8 275.7L241.3 285L237.2 296.3L234 307.9L231.2 322L228.9 337.5L227.2 354.2L224.6 396.7L223.2 453.4L222.6 541L24.3 541L24.6 394.2L25.4 305.3L27 242.2L29.7 195.6L31.7 173.9L34.1 155.9L37.2 137.8L40.5 123.7L44.4 110.8L49.1 99.2L54.4 88.9L61.3 78.6L69.1 69.6L77.4 62.1L87.2 55.4L98.1 49.6L109.7 44.8L123.9 40.4L138.1 37.1L156.1 34L174.2 31.7L195.9 29.6L247.8 26.8L317.5 25.2Z"/>
<path fill="#9bffb1" d="M338.6 25.8L542 25.1L542 218.6L469.7 219L418.1 219.8L379.4 221.2L348.4 223.4L322.6 226.5L300.7 231L291.6 233.6L282.6 236.9L274.9 240.5L268.4 244.1L260.3 249.9L252.9 256.9L247.1 264.1L241.6 273.1L237.3 282.1L233.2 293.7L230.1 305.3L227.3 319.4L225.1 334.9L223.3 352.9L220.9 395.4L219.6 453.4L219 541L25.1 541L25.4 400.6L26.1 316.9L27.4 255L29.7 207.4L33.6 166.4L36.1 148.9L39 134L42.6 120.1L46.5 108.4L51.6 96.6L56.5 87.6L62.8 78.6L69.7 70.7L78.2 63.1L87.4 56.7L96.8 51.5L108.6 46.4L120.3 42.5L135.5 38.7L149.7 36L167.8 33.4L188.4 31.2L210.3 29.5L265.1 27Z"/>
<path fill="#8fffbc" d="M303.1 27L392.3 26.2L542 25.9L542 215L467.2 215.4L415.5 216.2L375.5 217.7L344.6 219.8L318.7 222.9L296.8 227.4L287.8 230L279.3 233.1L271 236.9L264.5 240.6L256.8 246.2L249.1 253.5L242.8 261.5L238.1 269.2L233.6 278.8L229.7 289.8L226.3 302.7L223.6 316.9L221.4 332.3L219.6 350.4L217.3 392.9L216 450.8L215.4 541L25.9 541L26.2 403.2L26.9 319.4L28.2 257.6L30.2 212.5L33.6 173.9L36 155.9L38.7 140.5L41.7 127.5L45.2 115.5L49.3 104.3L54.2 94L59.7 85L66.6 76L74.1 68.3L81.9 61.8L91.6 55.6L101.9 50.4L112.3 46.3L125.2 42.3L139.4 38.9L155.3 36.1L174.2 33.5L193.6 31.6L241.3 28.7Z"/>
<path fill="#84ffc7" d="M390.8 27L542 26.7L542 211.5L465.9 211.9L413 212.7L372.9 214.1L340.7 216.3L314.9 219.4L292.9 223.9L283.4 226.7L274.9 229.9L267.1 233.5L260.7 237.2L252.9 242.8L245.5 249.9L239.3 257.6L233.9 266.6L229.7 275.8L225.8 287.2L222.5 300.1L219.8 314.3L217.7 329.8L216.1 346.5L213.7 390.3L212.4 449.5L211.9 541L26.8 541L27.1 395.4L27.8 310.4L29.4 247.3L32 200.9L33.8 180.3L36.2 161L39 144.3L42.6 128.3L46.5 115.3L50.6 104.3L55.7 94L61.9 84L69.5 74.7L77.4 67L86.5 60.2L96.8 54.2L108.4 48.9L120 44.9L134.2 41.1L151 37.8L169.1 35.1L188.4 33L237.4 29.8L299.4 28Z"/>
<path fill="#79ffd2" d="M334.4 28.3L542 27.6L542 208L463.3 208.4L410.4 209.1L370.4 210.5L338.1 212.6L311 215.9L289.1 220.4L280 223.1L271 226.4L263.3 230.1L256.8 233.8L249.1 239.5L242.2 246L236 253.8L230.5 262.8L225.8 273L222.3 283.4L219 296.3L216.3 310.4L214.2 325.9L212.5 343.9L210.1 387.7L208.9 447L208.4 541L27.6 541L27.9 401.9L28.6 318.2L29.9 257.6L32.3 209.7L36.1 169.2L38.7 152L41.5 137.8L45 123.7L48.9 112.1L53.2 101.8L58.6 91.5L64.5 82.7L71.3 74.7L79.6 67L88.4 60.5L97.2 55.4L108.4 50.2L121.3 45.7L135.5 42L152.2 38.6L169.1 36.1L188.4 34L210.1 32.2L263.3 29.7Z"/>
<path fill="#6effde" d="M305.5 29.6L393.6 28.8L542 28.5L542 204.5L462 204.9L407.8 205.6L366.5 207L334.2 209.2L307.1 212.5L285.2 217L276.2 219.7L267.1 223L259.4 226.7L252.8 230.6L245.2 236.2L238.7 242.3L232.6 249.9L227.1 258.9L222.4 269.2L218.5 280.8L215.2 293.7L212.6 307.9L210.6 323.3L208.9 341.3L206.6 385.1L205.4 445.7L204.9 541L28.5 541L28.8 404.5L29.4 320.7L30.8 260.2L32.9 215.1L36.3 176.5L38.7 158.4L41.3 143.9L44.1 131.4L47.9 118.5L52.2 106.9L57.2 96.6L63.2 86.8L69.6 78.6L77.2 70.8L85.1 64.4L94.2 58.5L104.5 53.3L115.4 48.9L127.8 45.1L143.2 41.4L158.7 38.6L176.8 36.2L194.9 34.4L242.6 31.4Z"/>
<path fill="#63ffe9" d="M403.7 29.6L542 29.3L542 201.1L460.7 201.4L405.2 202.2L363.9 203.5L331.7 205.6L304.6 208.8L282.6 213.2L273.6 215.8L264.5 219.1L256.5 222.8L249.1 227.1L241.3 232.9L234.5 239.6L228.4 247.3L223.1 256.3L218.5 266.6L214.7 278.2L211.5 291.1L209 305.3L207 320.7L205.4 338.8L203.1 383.9L201.9 444.4L201.4 541L29.4 541L29.7 398L30.5 310.4L32.2 247.3L34.8 201.3L37 179L39.4 161L42.4 144.3L45.7 130.1L49.6 117.2L54.2 105.7L59.5 95.3L65.8 85.6L72.7 77.3L81.3 69.2L90.3 62.5L100.7 56.6L112 51.5L125.2 47.1L140.7 43.1L157.4 39.9L175.8 37.4L196.2 35.3L245.4 32.2L309.7 30.5Z"/>
<path fill="#58fff4" d="M349.1 30.9L542 30.3L542 197.7L458.1 198L402.6 198.7L360 200.1L327.8 202.2L299.4 205.6L277.5 210.2L268.4 212.9L259.4 216.3L251.6 220L244.8 224.1L237.4 229.7L230.1 237L224.3 244.7L219.1 253.8L214.6 264.1L210.9 275.7L207.9 288.5L205.4 302.7L203.4 318.2L201.8 336.2L199.6 381.3L198.5 443.1L198 541L30.3 541L30.6 403.2L31.3 319.4L32.7 258.9L35.1 211.2L37 189.3L39 171.3L41.6 154.6L45 137.8L48.9 123.7L52.9 112.2L57.6 101.8L62.7 92.7L69.1 83.7L76.1 75.8L84.7 68.3L94.1 61.8L103.6 56.7L115.7 51.5L127.8 47.6L143.1 43.8L158.7 40.9L176.8 38.3L197.4 36.2L219.4 34.5L273.5 32.2Z"/>
<path fill="#4dffff" d="M321.2 32.2L405.2 31.5L542 31.2L542 194.2L456.8 194.6L400 195.3L357.5 196.6L323.9 198.8L296.8 202L274.9 206.5L265.8 209.1L256.6 212.5L248.4 216.4L241.3 220.6L233.6 226.5L226.9 233.1L220.7 241.4L215.5 250.4L211.3 260.2L207.5 271.8L204.5 284.7L201.8 300.1L199.8 316.9L198.2 334.9L196.1 380L195 441.8L194.6 541L31.3 541L31.6 404.5L32.3 320.7L33.6 261.5L35.9 215.1L37.5 194.5L39.8 173.9L42.3 157.1L45.1 143L48.3 130.1L52 118.5L56.7 106.9L61.3 97.9L67.1 88.8L74.3 79.9L82.4 72.1L90.3 66L99.4 60.4L109.7 55.4L122.6 50.5L135.5 46.8L149.7 43.7L166.5 40.8L184.5 38.5L206.5 36.5L256.8 33.7Z"/>
<path fill="#4df4ff" d="M517.6 32.2L542 32.2L542 190.9L454.2 191.2L396.2 191.9L353.6 193.2L320 195.4L291.6 198.8L269.7 203.4L260.7 206.2L251.6 209.7L243.9 213.5L237 217.7L229.7 223.4L222.7 230.6L216.9 238.3L211.8 247.3L207.5 257.6L203.8 269.2L200.8 282.1L198.2 297.6L196.2 314.3L194.7 332.3L192.7 377.4L191.6 440.5L191.2 541L32.2 541L32.6 391.6L33.6 302.9L35.5 240.9L38.7 193.8L41.2 172.6L43.9 155.3L47.6 137.8L51.6 123.7L56.8 110.1L62.3 99.2L68.9 88.9L76.5 79.9L85.2 71.8L95.5 64.4L107.1 58.1L118.7 53.3L132.5 48.9L148.9 45.1L166.5 42L187.1 39.4L209 37.4L232.3 35.9L294.2 33.7L378.1 32.6Z"/>
<path fill="#4de9ff" d="M402.8 33.5L542 33.2L542 187.5L453 187.8L394.9 188.5L351 189.8L317.5 191.9L289.1 195.2L267.1 199.7L256.8 202.8L248.4 206.1L240.4 210L233.6 214.1L225.8 220.2L219.4 226.8L213.7 234.4L208.5 243.5L204.1 253.8L200.5 265.3L197.4 278.2L194.8 293.7L192.8 310.4L191.3 328.5L189.3 374.8L188.2 438L187.8 541L33.2 541L33.6 400.6L34.4 314.3L36 252.5L38.7 206.5L40.9 184.2L43.3 166.2L46.3 149.4L49.6 135.2L53.6 122.4L58.1 110.8L63.3 100.5L69.7 90.5L77.4 81.2L85.7 73.4L94.4 67L105.6 60.5L117.3 55.4L130.3 51L144.5 47.3L161.3 44.1L180.7 41.3L200 39.2L249.1 36.1L311 34.4Z"/>
<path fill="#4ddeff" d="M364.4 34.8L542 34.2L542 184.1L450.4 184.4L391 185.1L347.1 186.4L313.6 188.5L285.2 191.9L272.3 194.2L262 196.7L252.5 199.7L243.9 203L236.2 206.9L229.2 211.2L222 217.1L215.2 224.1L209.1 232.7L204 242.2L199.9 252.5L196.4 264.1L193.6 276.9L191.1 292.4L187.8 327.2L185.8 373.5L184.8 436.7L184.5 541L34.3 541L34.6 401.9L35.4 318.2L36.9 257.6L39.5 211.2L41.3 191.3L43.8 171.3L46.5 155.3L49.7 140.4L53.8 126.2L58.1 114.7L63 104.3L68.3 95.3L74.8 86.6L82.6 78.4L91.6 70.9L100.7 65L111 59.7L122.6 55L135.5 51L151 47.3L167.8 44.3L185.8 41.9L205.3 39.9L229.7 38.2L285.2 36Z"/>
<path fill="#4dd2ff" d="M343.3 36.1L542 35.3L542 180.8L449.1 181L389.7 181.7L344.6 183L311 185L282.6 188.3L269.7 190.6L259.4 193L250.2 195.8L241.3 199.2L233.6 202.9L225.8 207.7L218.2 213.8L211.6 220.7L205.5 229.3L200.7 238.3L196.5 248.6L193 260.2L190.2 273.1L187.7 288.5L184.4 323.3L182.4 369.7L181.4 434.1L181.1 541L35.3 541L35.6 408.3L36.4 325.9L37.8 265.3L40.1 219L43.9 180L46.5 162.8L49.6 146.8L52.9 134L56.8 122.2L61.6 110.8L67.1 100.4L73.6 91L80.9 82.4L89 75.1L98.1 68.6L107.6 63.1L119.1 58L130.3 54L144.5 50.1L161.3 46.7L178.1 44.1L197.4 41.9L219.4 40L272.3 37.5Z"/>
<path fill="#4dc7ff" d="M330.3 37.4L411.7 36.7L542 36.4L542 177.4L445.2 177.6L384.6 178.3L339.4 179.6L305.8 181.7L277.5 185.1L265.8 187.2L254.2 190L245.2 192.8L236.2 196.4L228.4 200.3L221.4 204.8L214.2 210.7L207.7 217.7L201.5 226.7L196.8 235.7L192.7 246L189.3 257.6L186.6 270.5L184.1 286L180.9 320.7L179 368.4L178 432.8L177.7 541L36.4 541L36.7 409.6L37.5 327.2L38.9 266.6L41.3 219.4L45.2 180.3L47.7 163.6L50.3 150.2L54.1 135.2L57.9 123.7L62.2 113.4L67.1 103.8L73.5 94L80 86L87.8 78.5L96.8 71.5L106.3 65.7L117 60.5L130.3 55.6L143.2 52L157.4 48.8L174.2 46L192.3 43.7L214.2 41.6L264.5 38.9Z"/>
<path fill="#4dbcff" d="M322.4 38.6L406.5 37.8L542 37.5L542 174L443.9 174.3L383.3 174.9L338.1 176.1L303.3 178.2L274.9 181.5L262 183.8L251.6 186.3L242.6 189L233.6 192.5L225.8 196.3L218.1 201.1L210.5 207.4L203.9 214.5L198.1 222.8L193.6 231.5L189.4 242.2L185.9 253.8L183.1 266.6L180.7 282.6L177.4 318.2L175.6 364.5L174.7 430.2L174.4 541L37.6 541L37.9 408.3L38.7 325.9L40 267.9L42.4 221.6L44.1 200.9L46.4 181.6L48.9 164.9L51.6 151.3L55 137.8L58.8 126.2L63.2 115.2L68.1 105.6L73.9 96.6L81.1 87.6L89 79.9L97.3 73.4L107.1 67.3L117.4 62.2L128.4 58L142 53.9L157.4 50.3L172.3 47.7L191 45.2L210.3 43.2L259.4 40.3Z"/>
<path fill="#4db1ff" d="M318.1 39.9L402.6 39.1L542 38.7L542 170.7L441.3 170.9L379.4 171.5L334.2 172.7L299.4 174.8L271 178.1L258.4 180.3L247.6 182.9L237.4 186L228.4 189.7L220.7 193.7L213.5 198.4L206.5 204.3L200 211.4L194 220.3L189.4 229.3L185.5 239.6L182 252.2L179.3 265.3L177 280.8L174 315.6L172.1 363.2L171.3 428.9L171 541L38.8 541L39.1 410.9L39.8 328.5L41.3 267.9L43.5 224.1L45.2 204.4L47.4 184.2L50 167.5L52.8 153.3L56 140.4L59.7 128.8L64.3 117.2L68.8 108.2L74.8 98.6L81.5 90.2L89.1 82.4L98.1 75.2L107.1 69.4L117.4 64.2L129.9 59.3L142.5 55.4L157.4 51.8L172.9 49L191 46.5L209.1 44.7L256.8 41.7Z"/>
<path fill="#4da6ff" d="M541 39.9L542 39.9L542 167.3L432.3 167.5L367.8 168.2L320 169.8L285.2 172.3L269.7 174.2L256.6 176.5L243.9 179.4L233.6 182.6L223.4 186.8L215.5 191L207.8 196.4L201.3 202.2L195.8 208.7L190.6 216.4L186 225.4L182.5 234.4L179.4 244.8L176.5 257.6L174.2 271.8L172.4 287.2L170 322L168.5 369.7L167.8 434.1L167.6 541L40 541L40.4 398L41.4 311.7L43.4 248.6L46.8 202.2L49.3 181.6L52.5 162.3L56.3 145.6L60.7 131.4L65.8 118.5L71.9 106.9L78.7 96.7L86.7 87.6L95.5 79.7L106.4 72.1L118.7 65.7L131.6 60.5L144.5 56.6L161.3 52.7L180.7 49.4L201.3 46.9L222 45L247.8 43.4L311 41.3L397.5 40.3Z"/>
<path fill="#4d9bff" d="M534.5 41.2L542 41.2L542 163.9L431 164.1L365.2 164.8L317.5 166.3L282.6 168.7L267.1 170.6L252.9 172.9L241.3 175.6L229.9 179L220.3 182.9L211.6 187.5L203.9 193L197.9 198.4L192.3 204.8L187.1 212.5L182.5 221.6L179 230.6L175.9 240.9L173 253.8L170.7 267.9L168.9 283.4L166.5 318.2L165.1 365.8L164.4 431.5L164.2 541L41.3 541L41.7 399.3L42.7 313L44.8 249.9L46.4 224.1L48.2 203.5L50.7 182.9L54 163.6L57.8 146.8L61.9 133.3L67.1 120.4L73.5 108.2L80.5 97.9L88.4 88.9L98.1 80.4L108.3 73.4L120 67.3L131.6 62.5L146.2 58L162.6 54.1L180.7 51L201.3 48.4L223.1 46.4L246.5 44.9L309.7 42.7L394.9 41.6Z"/>
<path fill="#4d8fff" d="M323.7 43.8L407.8 42.9L542 42.6L542 160.5L369.1 161.2L322.6 162.4L287.8 164.4L258.1 167.8L245.9 170L234.9 172.7L225.8 175.5L216.8 179.2L209.1 183.2L201.3 188.4L194.4 194.5L187.8 202.2L182.8 210L178.1 219.7L174.2 230.4L171.1 242.2L168.3 256.3L166.2 271.8L163.3 307.9L161.7 355.5L161 422.5L160.8 541L42.6 541L43 412.2L43.7 331L45.2 273.7L47.6 228L49.3 207.4L51.6 188.1L54.2 171.5L56.8 158.7L60.5 144.3L64.3 132.7L68.5 122.4L73.6 112.4L80 102.4L86.7 94L94.5 86.3L103.2 79.4L112.6 73.4L122.8 68.3L135.5 63.2L148.4 59.3L163.9 55.6L179.4 52.8L197.4 50.4L215.5 48.5L262 45.6Z"/>
<path fill="#4d84ff" d="M332.8 45.1L414.2 44.3L542 44L542 157L366.5 157.7L318.7 158.8L283.9 160.8L254.2 164.2L241.3 166.5L231 169.1L222 171.9L212.9 175.5L205.2 179.5L197.4 184.8L190.8 190.6L184.1 198.4L179.1 206.1L174.2 216.3L170.5 226.7L167.4 238.3L164.7 252.5L162.6 267.9L159.8 304L158.2 352.9L157.5 421.2L157.3 541L44 541L44.4 413.5L45.2 332.3L46.6 275.7L49 229.4L52.9 191.1L55.5 174.5L58.2 161L61.9 146.4L65.8 134.6L70.9 122.4L75.7 113.4L81.5 104.3L89 95.1L96.8 87.5L105.8 80.5L115 74.7L125.3 69.6L138.1 64.5L151.2 60.5L166.5 57L182.6 54.1L201.3 51.6L219.4 49.8L268.4 46.8Z"/>
<path fill="#4d79ff" d="M347.8 46.4L542 45.4L542 153.5L362.6 154.1L314.9 155.3L280 157.2L250.4 160.5L237.4 162.8L227.1 165.3L218.1 168.1L209.1 171.7L201.3 175.7L193.6 181L186.9 186.8L180.3 194.5L174.6 203.5L170.4 212.5L166.7 222.8L163.7 234.4L161 248.6L158.9 264.1L156.2 300.1L154.6 349.1L153.9 417.3L153.8 541L45.5 541L45.9 414.8L46.6 334.9L48.2 275.7L50.7 229.3L52.7 207.4L54.8 190.6L57.5 173.9L60.7 159.2L64.4 145.6L68.4 134.1L73.6 122.4L78.7 113.1L85.2 103.7L92.9 94.8L100.7 87.6L111 80L120.1 74.7L131.6 69.4L145.5 64.4L158.7 60.7L172.9 57.7L191 54.7L209.1 52.5L231 50.5L281.3 47.9Z"/>
<path fill="#4d6eff" d="M373.2 47.7L542 47L542 149.9L357.5 150.5L309.7 151.6L274.9 153.6L245.2 156.9L232.3 159.3L222 161.8L211.6 165.2L203.2 168.7L196.1 172.6L188.7 177.8L182 183.9L176.3 190.6L170.7 199.7L166.5 208.7L162.9 219L159.6 231.9L157 246L155 261.5L152.4 297.6L150.9 346.5L150.3 414.8L150.2 541L47.1 541L47.5 409.6L48.3 329.8L50.1 269.2L52.8 225.4L56.9 189.3L59.6 173.9L63.2 157.9L67.1 144.7L71.6 132.7L76.5 122.4L82.6 112L89.2 103L97.7 94L106.8 86.3L116.3 79.9L127.8 73.8L139.4 68.9L153.4 64.4L167.8 60.8L182.6 58L200.2 55.4L220.7 53.2L242.6 51.5L299.4 49Z"/>
<path fill="#4d63ff" d="M424.7 48.9L542 48.6L542 146.3L354.9 146.8L307.1 147.8L271 149.8L241.3 153L228.4 155.3L218.1 157.8L207.8 161.1L198.8 164.9L191 169.2L184.3 173.9L177.4 180.3L171.6 187.4L166.5 195.8L162.4 204.8L158.7 215.4L155.6 228L153.1 242.2L151.2 257.6L148.6 293.7L147.2 342.6L146.7 412.2L146.6 541L48.7 541L49.1 409.6L50.1 325.9L51.9 267.9L55.1 221.6L57.4 200.9L60.1 182.9L63.2 167.6L67.1 152.9L71 141.4L76.3 128.8L82.6 117.4L89 108.2L96.8 99.2L105.8 90.9L115.6 83.7L126.5 77.5L138.3 72.1L151 67.7L166.5 63.4L182 60.3L198.7 57.6L219.4 55.2L243.9 53.2L269.7 51.8L331.7 49.9Z"/>
<path fill="#4d58ff" d="M344.1 51.5L422 50.7L542 50.4L542 142.6L348.4 143L300.7 144.1L265.8 145.9L236.2 149.1L223.3 151.4L212.9 153.9L202.6 157.2L193.8 161L185.8 165.5L179.5 170L172.9 176.3L167.5 182.9L162.6 190.9L158 200.9L154.6 211.2L151.4 224.1L149 238.3L147.2 253.8L144.7 289.8L143.4 338.8L142.9 408.3L142.9 541L50.5 541L50.8 419.9L51.7 341.3L53.2 283.4L55.8 237L57.8 215.1L60 198.4L62.7 181.6L65.8 167.4L69.7 153.5L73.6 142.5L78.7 130.7L83.9 121.3L90.3 111.8L98.1 102.6L105.8 95.2L115.6 87.6L126 81.2L136.5 76L149.7 70.9L162.7 67L178.1 63.4L194 60.5L212.9 58L231 56.2L280 53.2Z"/>
<path fill="#4d4dff" d="M397.3 52.8L542 52.3L542 138.8L343.3 139.2L295.5 140.1L259.4 142L229.7 145.2L216.8 147.6L206.5 150.2L197 153.3L188.4 157L180.7 161.4L174.3 166.2L167.8 172.5L162.6 179L157.4 187.8L153.4 197.1L150.1 207.4L147.1 220.3L144.8 234.4L143 249.9L140.8 284.7L139.5 333.6L139.1 403.2L139 541L52.4 541L52.8 413.5L53.7 336.2L55.5 277.2L58.3 233.1L60.7 210.9L63.2 193.2L65.9 179L69.7 163.5L73.6 151.2L78.7 138.4L83.9 128.2L90.3 117.9L98.1 108.1L106.9 99.2L116.3 91.5L126.2 85L138.6 78.6L151 73.6L163.8 69.6L179.7 65.7L194.9 62.9L212.9 60.3L236.2 58L258.1 56.4L314.7 54.1Z"/>
<path fill="#4d4df4" d="M355.3 55.4L542 54.3L542 134.9L338.1 135.1L290.4 136L255.5 137.6L225.8 140.7L214.2 142.6L202.6 145.3L193.5 148.1L184.5 151.8L176.8 156L169.8 161L163.9 166.6L158 173.9L152.7 182.9L148.8 191.9L145.6 202.2L142.9 213.8L140.6 228L138.8 243.5L136.6 279.5L135.4 328.5L135.1 541L54.4 541L54.8 419.9L55.7 342.6L57.4 284.7L60.2 239.6L61.9 221.4L64.5 202L67.1 187.3L70.4 172.6L74.6 158.4L78.7 147.3L83.9 136.2L89 127.1L96.8 116.2L104.5 107.3L113.2 99.2L123.4 91.5L134 85L144.6 79.9L158 74.7L170.8 70.8L187.1 67.1L202.3 64.4L221.8 61.8L240 60.1L290.4 57.1Z"/>
<path fill="#4d4de9" d="M474.5 56.7L542 56.5L542 130.7L322.6 130.9L274.9 131.9L240 133.8L224.5 135.4L210.3 137.5L197.4 140.3L187.1 143.4L178.1 147.2L170.3 151.5L163.9 156.2L157.4 162.5L152.6 168.7L148.1 176.5L144.2 185.5L141.3 194.5L138.8 204.8L136.5 217.7L133.6 246L131.9 280.8L131.1 328.5L131 541L56.6 541L57.1 414.8L58.2 333.6L60.5 271.8L64 228L66.7 207.4L69.7 190.5L73.6 174.2L77.4 161.7L82.6 148.6L88 137.8L95.5 125.9L103.2 116.1L112.3 106.7L122.6 97.9L134 90.2L145.8 83.8L158.4 78.6L172.9 73.9L188.4 70.1L205.1 67L223.7 64.4L245.2 62.3L296.3 59.3L366.5 57.5Z"/>
<path fill="#4d4dde" d="M451.8 59.3L542 59L542 126.4L311 126.4L263.3 127.3L229.7 129.1L214.2 130.7L200 132.9L188.4 135.5L178.1 138.7L169.1 142.6L161.9 146.8L155.4 152L149.7 158.2L145 164.9L141.6 171.3L138.5 179L135.4 189.3L133.1 199.7L131.3 211.2L128.6 240.9L127.2 274.4L126.6 320.7L126.7 541L59.1 541L59.6 421.2L60.7 340.6L62.8 280.8L66.1 237L68.4 218.4L71 202.2L74.8 184.8L78.7 171.4L83.9 157.6L89 146.9L95.5 136.1L103.2 125.5L112.3 115.3L122.6 105.6L132.6 97.9L144.8 90.2L157.9 83.7L171.7 78.6L185.1 74.7L202.9 70.8L218.8 68.3L240.4 65.7L264.5 63.7L291.6 62.2L354.9 60.3Z"/>
<path fill="#4d4dd2" d="M506.6 61.8L542 61.7L542 121.8L299.4 121.4L255.5 122L223.3 123.3L194.9 126.1L183.2 128.1L172.9 130.7L163.9 133.8L156.1 137.6L149.7 142L144.5 146.8L139.5 153.3L135.8 159.7L132.6 167.5L129.8 176.5L127.6 186.8L125.8 198.4L123.3 226.7L122.1 258.9L121.6 302.7L122 541L61.9 541L62.4 417.3L63.7 337.5L66 280.8L67.8 256.3L69.9 235.7L72.4 217.7L76.1 198.7L80 184.2L85.2 169.6L90.3 158.5L96.8 147.6L104.5 137.1L113.6 126.7L125.6 114.6L137.3 104.3L147.9 96.6L158.8 90.2L169.9 85L184.5 79.9L199.1 76L219.1 72.1L237.8 69.6L260.7 67.3L313.6 64.3L388.4 62.6Z"/>
<path fill="#4d4dc7" d="M410 65.7L542 65L542 116.7L256.8 115.6L216.8 116L169.1 117.2L160 116.3L157.4 115.2L155.9 113.4L155.7 112.1L156.1 109.5L157.4 106.9L160.4 103L167.7 96.6L175.9 91.5L183.8 87.6L193.9 83.7L207.2 79.9L222 76.7L234.9 74.5L253.5 72.1L291.6 69.1L340.8 67ZM109.7 155.9L112.3 155.4L113.6 155.6L115.4 157.1L116.8 161L117.4 168.7L116.2 216.4L115.8 256.3L117 541L65.1 541L65.7 421.2L66.9 347.8L69.1 292.4L72.5 251.2L74.8 233L78.7 212.5L82.6 197.6L86.5 186.5L91.6 175.6L96.8 167.4L103.2 160.1L107.1 157.1Z"/>
<path fill="#4d4dbc" d="M428.2 69.6L542 68.9L542 111L363.9 110L304.6 109.1L259.4 107.8L232.3 106.4L214.3 104.3L205.1 101.8L202.6 100.1L201.3 97.9L202 95.3L204.3 92.7L210.6 88.9L216.7 86.3L224.8 83.7L235.3 81.2L259.4 77.1L285.2 74.4L321.6 72.1L366.5 70.6ZM98 200.9L100.3 202.2L101.9 204.8L104.5 213.9L106.6 231.9L108 258.9L109.3 304L110.2 363.2L111.2 541L69 541L69.6 438L70.6 372.3L72.3 321L74.8 281.4L78.7 248.9L81.3 234.9L83.9 224.4L86.5 216.3L90.3 207.7L94.2 202.6L96.8 201Z"/>
<path fill="#4d4db1" d="M462.4 74.7L542 74.2L542 103.8L406.5 102.8L356.2 101.8L322.6 100.7L297.9 99.2L277.5 96.9L269.4 95.3L265.5 94L263.4 92.7L262.6 91.5L262.9 90.2L266.8 87.6L275.1 85L288.7 82.4L312.3 79.7L340.7 77.8L372.9 76.4ZM90.1 262.8L91.6 262.1L92.9 262.9L94.2 265L96.8 274.8L99.1 293.7L100.7 318.1L101.9 352.7L103 403.2L104 541L74.4 541L75.5 414.8L76.5 373.5L78.1 337.5L80 310.1L82.6 288.2L83.9 280.6L86.5 269.9L87.8 266.3Z"/>
<path fill="none" stroke="#0000af" stroke-width="1.15" d="M542 65.8L427.1 66.4L352.3 67.6L299.4 69.6L276.2 71.2L254.2 73.2L233.6 76L219.7 78.6L204.2 82.4L192.7 86.3L181.7 91.5L173.9 96.6L168.8 101.8L167.3 104.3L166.8 106.9L167 108.2L167.8 109.5L169.6 110.8L172.9 112L180.7 113.2L191 113.6L405.2 115L542 115.5M115.7 541L115.2 404.5L113.9 190.6L113.4 180.3L112.2 172.6L111 169.3L109.7 167.5L108.4 166.7L107.1 166.5L104.5 167L101.9 168.5L96.8 173.6L91.6 181.4L86.5 192.4L82.6 203.8L78.7 219.3L76.1 233.2L73.4 253.8L71.3 275.7L69.7 298.8L67.7 351.7L66.5 426.4L65.9 541"/>
<path fill="none" stroke="#0030ff" stroke-width="1.15" d="M542 48.6L403.9 49.1L317.5 50.2L256.8 52.4L231.8 54.1L211.6 56L191 58.7L173.7 61.8L157.4 65.7L141.6 70.8L129.4 76L117.6 82.4L107.1 89.8L98.1 97.8L89.9 106.9L82.6 117.4L76.1 129.2L71 141.3L65.9 157.1L61.9 173.4L58.8 190.6L56.1 211.2L54.2 231.4L52.5 256.3L50.3 316.9L49.2 403.2L48.7 541M146.6 541L146.7 416.1L147.2 347.8L148.4 300.1L150.6 264.1L152.2 248.6L154.4 234.4L157.1 221.6L160.1 211.2L163.9 201.3L168 193.2L172.9 185.7L178.7 179L184.5 173.8L192.3 168.4L201.3 163.7L210.3 160.2L220.7 157.1L233.6 154.3L247.8 152.1L263.3 150.4L298.1 148.2L347.1 146.9L415.5 146.4L542 146.3"/>
<path fill="none" stroke="#009fff" stroke-width="1.15" d="M542 37.8L394.9 38.2L308.4 39.2L246.7 41.2L222 42.7L198.7 44.7L178.1 47.2L159.8 50.2L142.8 54.1L129 58.2L116.6 63.1L104.5 69.4L94.2 76.3L85.2 84.2L77.4 92.8L70.3 103L64.5 113.6L59.3 126.2L54.4 141.7L50.8 157.1L47.7 175.2L44.9 197.1L42.9 220.3L41.4 244.7L39.3 306.6L38.3 392.9L37.9 541M173.4 541L173.7 436.7L174.4 372.3L176 325.9L178.6 291.1L180.5 275.7L182.7 262.8L185.7 249.9L188.9 239.6L192.6 230.6L197.3 221.6L202.6 213.9L208.5 207.4L215.5 201.3L223.3 196.2L231.6 191.9L241.3 188.1L251.6 185L264.5 182.1L277.5 180L292.9 178.1L327.8 175.6L374.2 174.1L437.5 173.4L542 173.1"/>
<path fill="none" stroke="#10ffef" stroke-width="1.15" d="M542 30.3L388.4 30.7L300.7 31.6L238.7 33.5L212.9 35L189.7 36.9L167.8 39.5L149.6 42.5L132.9 46.2L119.5 50.2L106.4 55.4L95.5 61L85.2 68L76.1 75.9L68.1 85L61.2 95.3L55.5 106.2L50.3 119.3L46.3 132.7L42.6 149.4L39.6 167.5L37 189.4L35.1 212.5L33.6 238.3L31.7 300.1L30.7 387.7L30.4 541M197.9 541L198.3 450.8L199.2 391.6L200.9 347.8L203.7 314.3L205.7 300.1L208 287.2L210.8 275.7L214.2 264.8L218.1 255.5L222.5 247.3L227.8 239.6L233.5 233.1L240 227.4L247.8 222.1L256 217.7L265.3 213.8L276.2 210.4L287.8 207.6L300.7 205.3L314.9 203.4L348.4 200.6L392.3 198.8L451.7 197.9L542 197.5"/>
<path fill="none" stroke="#8fff70" stroke-width="1.15" d="M542 24L383.3 24.4L294.2 25.3L231 27.2L205.2 28.6L182 30.6L160 33.1L141.7 36.1L125.2 39.7L111.4 43.8L98.5 48.9L87.8 54.6L77.4 61.6L68.5 69.6L60.7 78.6L54.2 88.4L48.6 99.2L43.6 112.1L39.5 126.2L35.8 143L32.8 162.3L30.4 184.2L28.5 207.4L27.1 233.1L25.3 296.3L24.4 385.1L24.1 541M223.9 541L224.4 462.4L225.5 409.6L227.4 369.7L230.4 337.5L232.5 323.3L234.9 311.2L237.7 300.1L241.2 289.8L245.1 280.8L249.1 273.7L253.9 266.6L259.5 260.2L265.8 254.5L273.6 249L281.3 244.7L290.1 240.9L299.4 237.7L311 234.6L323.9 232.1L336.8 230.1L369.1 227.1L409.1 225.1L463.3 224L542 223.5"/>
<path fill="none" stroke="#ffef00" stroke-width="1.15" d="M542 18.4L383.3 18.7L292.9 19.5L228.4 21.3L202.6 22.7L179.3 24.5L156.1 27L138.1 29.7L120 33.5L106.5 37.4L93.1 42.5L82.6 47.9L72.3 54.7L63.2 62.6L54.8 72.1L48 82.4L42.6 93L37.4 106.3L33.5 119.8L29.8 137.8L27 155.9L24.6 177.8L22.9 199.7L21.4 226.7L19.6 292.4L18.7 382.6L18.4 541M254 541L254.7 475.3L256 427.6L258.1 391.6L261.4 362L263.5 349.1L266.1 337.5L269.1 327.2L272.3 318.3L276.2 309.8L280.3 302.7L284.9 296.3L290.4 290.1L296.4 284.7L303.3 279.8L310.4 275.7L318.9 271.8L327.8 268.6L338.1 265.6L349.7 263.1L362.6 260.9L392.3 257.7L428.4 255.6L476.2 254.3L542 253.6"/>
<path fill="none" stroke="#ff8000" stroke-width="1.15" d="M542 13.7L378.1 14L287.8 14.9L221.3 16.7L196.2 18.1L172.9 19.9L152.3 22.1L132.9 24.9L116.1 28.3L101.9 32.3L88.5 37.4L77.4 43L67.1 49.8L58.1 57.7L49.9 67L43.1 77.3L37.4 88.4L32.3 101.8L28.3 115.9L24.9 132.7L22.1 152L19.9 172.6L18.1 195.8L16.8 220.9L14.9 287.2L14.1 377.4L13.8 541M286.9 541L287.8 488.2L289.4 447L291.7 414.8L295.1 389L297.3 377.4L299.8 367.1L302.5 358.1L306 349.1L309.7 341.4L313.6 334.9L318.3 328.5L323.9 322.3L329.1 317.7L335.5 313L342.1 309.1L350.1 305.3L358.8 302L367.8 299.2L378.1 296.7L389.7 294.5L415.5 291.2L447.8 288.8L489.1 287.3L542 286.4"/>
<path fill="none" stroke="#ff0000" stroke-width="1.15" d="M542 9.5L378.1 9.8L285.2 10.6L219.4 12.4L192.3 13.8L169.1 15.5L145.8 17.9L127.4 20.6L111 24L96.8 28L83.9 32.9L72.6 38.6L62.9 45.1L53.9 52.8L45.9 61.8L38.9 72.1L33.5 82.4L28.4 95.5L24.3 109.5L20.8 126.2L18.1 144.6L15.6 167.5L13.9 190.6L12.4 217.7L10.6 283.4L9.8 376.1L9.5 541M328.1 541L329.3 501.1L331.2 468.9L333.8 443.1L337.3 421.2L341.9 403.2L344.6 395.3L347.7 387.7L351 381.2L354.9 374.8L358.8 369.6L363.9 363.8L368.7 359.4L374.2 355.1L380.7 351L387.1 347.7L394.9 344.4L402.6 341.6L411.7 339.1L422 336.7L443.9 333.2L469.7 330.6L502 328.7L542 327.5"/>
<path fill="none" stroke="#800000" stroke-width="1" d="M542 0.1L335.5 0.1L330.4 5.3L160 5.3L154.9 10.4L123.9 10.4L118.7 15.6L103.2 15.6L98.1 20.7L87.8 20.7L82.6 25.9L77.4 25.9L72.3 31L67.1 31L62 36.1L31.1 67L31.1 72.1L25.9 77.3L25.9 82.4L20.8 87.6L20.8 97.9L15.6 103L15.6 118.5L10.4 123.7L10.4 154.6L5.3 159.7L5.3 329.8L0.1 334.9L0.1 541M392.2 541L392.2 494.6L397.4 489.5L397.4 468.9L402.5 463.7L402.5 453.4L407.7 448.3L407.7 443.1L412.8 438L412.8 432.8L413 432.7L433.6 412.1L438.8 412.1L443.9 406.9L449.1 406.9L454.2 401.8L464.6 401.8L469.7 396.6L490.4 396.6L495.5 391.5L542 391.5M0.5 541V0.5H542"/>
<path d="M0.5 1v5M1 0.5h5M51.5 1v5M1 51.5h5M103.5 1v5M1 103.5h5M154.5 1v5M1 154.5h5M206.5 1v5M1 206.5h5M258.5 1v5M1 257.5h5M309.5 1v5M1 309.5h5M361.5 1v5M1 360.5h5M412.5 1v5M1 412.5h5M464.5 1v5M1 463.5h5M516.5 1v5M1 515.5h5" stroke="#400000" stroke-opacity="0.55" fill="none"/><path d="M51.5 0V541M0 51.5H542M103.5 0V541M0 103.5H542M154.5 0V541M0 154.5H542M206.5 0V541M0 206.5H542M258.5 0V541M0 257.5H542M309.5 0V541M0 309.5H542M361.5 0V541M0 360.5H542M412.5 0V541M0 412.5H542M464.5 0V541M0 463.5H542M516.5 0V541M0 515.5H542" stroke="#000" stroke-opacity="0.075" fill="none"/>
<path d="M414.0 84.9L365.0 84.9L326.0 85.0L326.0 90.6L365.0 89.4L414.0 87.8Z" fill="#000050"/>
<path d="M327.0 87.7C320.0 87.8 298.7 87.8 285.0 88.1C271.3 88.4 257.3 88.9 245.0 89.3C232.7 89.7 221.2 90.2 211.0 90.7C200.8 91.2 192.7 91.6 183.5 92.4C174.3 93.2 165.0 94.2 155.8 95.5C146.6 96.8 137.3 98.3 128.1 100.5C118.9 102.7 108.2 106.0 100.4 108.8C92.5 111.6 86.3 114.3 81.0 117.1C75.7 119.9 71.5 122.9 68.5 125.4C65.5 127.9 64.0 130.2 63.0 132.3C61.9 134.4 61.9 136.1 62.2 137.9C62.5 139.7 63.1 141.5 64.9 142.9C66.6 144.3 66.8 144.2 72.7 146.2C78.6 148.2 91.2 151.9 100.4 155.0C109.6 158.1 118.9 161.3 128.1 164.7C137.3 168.1 148.0 172.2 155.8 175.3C163.7 178.5 169.7 181.3 175.2 183.6C180.7 185.9 185.1 187.8 189.0 189.1C192.9 190.3 195.7 191.3 198.7 191.1C201.7 190.9 204.8 189.9 207.0 187.7C209.2 185.5 210.6 181.4 212.0 178.0C213.4 174.6 213.7 173.4 215.4 167.0C217.1 160.6 220.3 147.0 222.3 139.3C224.3 131.6 225.3 127.8 227.3 120.9" fill="none" stroke="#02021e" stroke-width="5.5" stroke-linejoin="round" stroke-linecap="round"/>
<path d="M227.3 120.9C229.3 114.0 232.3 104.2 234.2 97.8C236.1 91.4 237.1 88.1 238.8 82.5" fill="none" stroke="#02021e" stroke-width="5.0" stroke-linejoin="round" stroke-linecap="round"/>
<path d="M238.8 82.5C240.5 76.9 242.5 69.4 244.2 64.0C245.9 58.6 247.7 53.7 248.8 50.2C249.9 46.8 250.6 44.6 250.6 43.3C250.6 42.0 249.8 41.4 248.6 42.6C247.4 43.7 246.4 45.6 243.5 50.2C240.6 54.8 234.8 64.3 231.2 70.2" fill="none" stroke="#02021e" stroke-width="4.3" stroke-linejoin="round" stroke-linecap="round"/>
<path d="M231.2 70.2C227.6 76.1 225.1 79.9 221.9 85.5C218.7 91.1 215.0 98.1 211.9 104.0" fill="none" stroke="#02021e" stroke-width="5.0" stroke-linejoin="round" stroke-linecap="round"/>
<path d="M211.9 104.0C208.8 109.9 207.3 114.1 203.5 120.9C199.7 127.7 193.6 137.1 189.0 144.8C184.4 152.5 180.0 160.4 176.0 167.0C172.0 173.6 169.7 178.6 165.0 184.5" fill="none" stroke="#02021e" stroke-width="5.5" stroke-linejoin="round" stroke-linecap="round"/>
<path d="M165.0 184.5C160.3 190.4 155.0 196.0 148.1 202.5C141.2 209.0 131.7 216.8 123.5 223.4" fill="none" stroke="#02021e" stroke-width="5.1" stroke-linejoin="round" stroke-linecap="round"/>
<path d="M123.5 223.4C115.3 229.9 107.0 235.5 98.8 241.8C90.6 248.2 81.2 256.0 74.2 261.5C67.2 267.0 61.5 271.1 57.0 275.0C52.5 278.9 49.4 282.1 47.2 285.0C44.9 287.9 43.7 290.2 43.5 292.3C43.3 294.4 44.1 296.7 45.9 297.7C47.7 298.7 49.8 298.9 54.5 298.5C59.2 298.1 66.8 296.4 74.2 295.3C81.6 294.2 90.6 292.6 98.8 291.8C107.0 291.0 116.1 290.4 123.5 290.3C130.9 290.2 138.3 290.5 143.2 291.0C148.1 291.5 150.3 292.1 153.0 293.5C155.7 294.9 158.2 297.4 159.2 299.7C160.2 301.9 160.2 303.9 159.2 307.0C158.2 310.1 156.1 313.9 153.0 318.0C149.9 322.1 145.6 326.6 140.7 331.7C135.8 336.8 130.5 342.4 123.5 348.5C116.5 354.6 107.0 361.6 98.8 368.2C90.6 374.8 81.2 382.1 74.2 387.8C67.2 393.5 61.7 398.3 57.0 402.6C52.3 406.9 48.4 410.6 45.9 413.7C43.3 416.8 41.9 418.9 41.7 421.0C41.5 423.1 42.6 425.4 44.7 426.0C46.8 426.6 49.6 425.5 54.5 424.8C59.4 424.1 66.8 422.8 74.2 421.6C81.6 420.4 90.6 418.6 98.8 417.4C107.0 416.2 116.5 415.0 123.5 414.4C130.5 413.8 136.0 413.3 140.7 413.7C145.4 414.1 148.9 415.3 151.8 416.9C154.7 418.5 157.1 420.6 157.9 423.5C158.7 426.4 158.3 430.7 156.7 434.6C155.1 438.5 152.0 442.7 148.1 447.0C144.2 451.3 138.4 456.1 133.3 460.5C128.2 464.9 124.6 468.0 117.3 473.7C110.0 479.4 98.8 487.7 89.6 494.9C80.4 502.1 69.6 509.6 61.9 517.0C54.2 524.4 46.6 535.2 43.3 539.2C40.0 543.2 42.4 540.5 42.2 540.8" fill="none" stroke="#02021e" stroke-width="4.7" stroke-linejoin="round" stroke-linecap="round"/>
<path d="M327.0 87.8L319.4 87.8L308.5 87.9" fill="none" stroke="#000050" stroke-width="5.4" stroke-linejoin="round" stroke-linecap="round"/>
<path d="M308.5 87.9L296.4 88.0L285.0 88.2" fill="none" stroke="#000050" stroke-width="5.3" stroke-linejoin="round" stroke-linecap="round"/>
<path d="M285.1 88.2L274.8 88.4L264.6 88.7" fill="none" stroke="#000050" stroke-width="5.3" stroke-linejoin="round" stroke-linecap="round"/>
<path d="M264.6 88.7L254.6 89.1L245.1 89.4" fill="none" stroke="#000059" stroke-width="5.3" stroke-linejoin="round" stroke-linecap="round"/>
<path d="M245.1 89.4L236.0 89.8L227.3 90.1" fill="none" stroke="#000059" stroke-width="5.2" stroke-linejoin="round" stroke-linecap="round"/>
<path d="M227.3 90.1L219.0 90.5L211.1 90.9" fill="none" stroke="#000059" stroke-width="5.1" stroke-linejoin="round" stroke-linecap="round"/>
<path d="M211.1 90.9L203.8 91.3L197.0 91.7" fill="none" stroke="#000062" stroke-width="5.0" stroke-linejoin="round" stroke-linecap="round"/>
<path d="M197.0 91.7L190.4 92.1L183.7 92.7" fill="none" stroke="#000062" stroke-width="4.9" stroke-linejoin="round" stroke-linecap="round"/>
<path d="M183.7 92.7L176.8 93.3L169.8 94.0" fill="none" stroke="#000062" stroke-width="4.8" stroke-linejoin="round" stroke-linecap="round"/>
<path d="M169.9 94.1L162.9 94.9L156.0 95.9" fill="none" stroke="#00006b" stroke-width="4.7" stroke-linejoin="round" stroke-linecap="round"/>
<path d="M156.1 95.9L149.1 96.9L142.2 98.1" fill="none" stroke="#00006b" stroke-width="4.6" stroke-linejoin="round" stroke-linecap="round"/>
<path d="M142.3 98.1L135.4 99.4L128.4 101.0" fill="none" stroke="#000074" stroke-width="4.4" stroke-linejoin="round" stroke-linecap="round"/>
<path d="M128.5 101.0L121.4 102.9L114.2 105.0" fill="none" stroke="#00007d" stroke-width="4.2" stroke-linejoin="round" stroke-linecap="round"/>
<path d="M114.3 105.0L107.3 107.2L100.9 109.3" fill="none" stroke="#000086" stroke-width="4.1" stroke-linejoin="round" stroke-linecap="round"/>
<path d="M101.0 109.3L95.4 111.4L90.4 113.5" fill="none" stroke="#00098f" stroke-width="3.9" stroke-linejoin="round" stroke-linecap="round"/>
<path d="M90.5 113.4L85.9 115.5L81.7 117.6" fill="none" stroke="#00128f" stroke-width="3.8" stroke-linejoin="round" stroke-linecap="round"/>
<path d="M81.8 117.5L78.0 119.6L74.7 121.8" fill="none" stroke="#00248f" stroke-width="3.8" stroke-linejoin="round" stroke-linecap="round"/>
<path d="M74.7 121.7L71.8 123.8L69.3 125.8" fill="none" stroke="#002d8f" stroke-width="3.7" stroke-linejoin="round" stroke-linecap="round"/>
<path d="M69.4 125.8L67.4 127.6L65.9 129.4" fill="none" stroke="#00368f" stroke-width="3.7" stroke-linejoin="round" stroke-linecap="round"/>
<path d="M65.9 129.3L64.8 131.0L63.9 132.6" fill="none" stroke="#003e8f" stroke-width="3.7" stroke-linejoin="round" stroke-linecap="round"/>
<path d="M63.9 132.6L63.3 134.1L63.0 135.5" fill="none" stroke="#003e8f" stroke-width="3.7" stroke-linejoin="round" stroke-linecap="round"/>
<path d="M63.0 135.5L62.9 136.9L63.1 138.2" fill="none" stroke="#003e8f" stroke-width="3.7" stroke-linejoin="round" stroke-linecap="round"/>
<path d="M63.1 138.2L63.4 139.5L63.9 140.8" fill="none" stroke="#00368f" stroke-width="3.7" stroke-linejoin="round" stroke-linecap="round"/>
<path d="M63.9 140.8L64.7 142.1L65.8 143.2" fill="none" stroke="#002d8f" stroke-width="3.7" stroke-linejoin="round" stroke-linecap="round"/>
<path d="M65.8 143.2L66.9 144.0L68.1 144.6" fill="none" stroke="#00248f" stroke-width="3.7" stroke-linejoin="round" stroke-linecap="round"/>
<path d="M68.1 144.6L70.1 145.3L73.6 146.5" fill="none" stroke="#001b8f" stroke-width="3.8" stroke-linejoin="round" stroke-linecap="round"/>
<path d="M73.5 146.5L79.0 148.3L86.1 150.5" fill="none" stroke="#00008f" stroke-width="3.9" stroke-linejoin="round" stroke-linecap="round"/>
<path d="M85.8 150.5L93.5 152.9L100.9 155.3" fill="none" stroke="#000074" stroke-width="4.5" stroke-linejoin="round" stroke-linecap="round"/>
<path d="M100.5 155.1L107.4 157.5L114.3 159.9" fill="none" stroke="#000062" stroke-width="5.2" stroke-linejoin="round" stroke-linecap="round"/>
<path d="M114.0 159.7L121.0 162.2L127.9 164.7" fill="none" stroke="#00006b" stroke-width="5.1" stroke-linejoin="round" stroke-linecap="round"/>
<path d="M127.7 164.5L134.8 167.2L142.1 169.9" fill="none" stroke="#000074" stroke-width="4.7" stroke-linejoin="round" stroke-linecap="round"/>
<path d="M142.0 169.8L149.0 172.5L155.3 175.0" fill="none" stroke="#00007d" stroke-width="4.5" stroke-linejoin="round" stroke-linecap="round"/>
<path d="M155.3 174.9L160.9 177.3L165.9 179.4" fill="none" stroke="#00008f" stroke-width="4.3" stroke-linejoin="round" stroke-linecap="round"/>
<path d="M165.9 179.4L170.4 181.4L174.7 183.2" fill="none" stroke="#00128f" stroke-width="4.3" stroke-linejoin="round" stroke-linecap="round"/>
<path d="M174.7 183.2L178.6 184.8L182.2 186.3" fill="none" stroke="#001b8f" stroke-width="4.2" stroke-linejoin="round" stroke-linecap="round"/>
<path d="M182.2 186.3L185.5 187.6L188.5 188.6" fill="none" stroke="#002d8f" stroke-width="4.2" stroke-linejoin="round" stroke-linecap="round"/>
<path d="M188.5 188.6L191.3 189.5L193.7 190.2" fill="none" stroke="#00368f" stroke-width="4.2" stroke-linejoin="round" stroke-linecap="round"/>
<path d="M193.7 190.1L196.0 190.5L198.2 190.6" fill="none" stroke="#00368f" stroke-width="4.2" stroke-linejoin="round" stroke-linecap="round"/>
<path d="M198.2 190.5L200.5 190.2L202.7 189.6" fill="none" stroke="#003e8f" stroke-width="4.1" stroke-linejoin="round" stroke-linecap="round"/>
<path d="M202.7 189.5L204.8 188.5L206.6 187.1" fill="none" stroke="#003e8f" stroke-width="4.1" stroke-linejoin="round" stroke-linecap="round"/>
<path d="M206.6 187.1L208.1 185.1L209.4 182.7" fill="none" stroke="#003e8f" stroke-width="4.1" stroke-linejoin="round" stroke-linecap="round"/>
<path d="M209.5 182.7L210.6 180.0L211.7 177.4" fill="none" stroke="#00368f" stroke-width="4.1" stroke-linejoin="round" stroke-linecap="round"/>
<path d="M211.7 177.3L212.6 175.1L213.3 173.0" fill="none" stroke="#00368f" stroke-width="4.1" stroke-linejoin="round" stroke-linecap="round"/>
<path d="M213.3 172.9L214.1 170.3L215.1 166.3" fill="none" stroke="#002d8f" stroke-width="4.1" stroke-linejoin="round" stroke-linecap="round"/>
<path d="M215.2 166.3L216.7 160.3L218.5 152.9" fill="none" stroke="#001b8f" stroke-width="4.1" stroke-linejoin="round" stroke-linecap="round"/>
<path d="M218.6 152.9L220.5 145.3L222.2 138.6" fill="none" stroke="#00008f" stroke-width="4.1" stroke-linejoin="round" stroke-linecap="round"/>
<path d="M222.2 138.6L223.6 133.5L224.7 129.1" fill="none" stroke="#00007d" stroke-width="4.2" stroke-linejoin="round" stroke-linecap="round"/>
<path d="M224.8 129.2L225.9 125.0L227.3 120.3" fill="none" stroke="#000074" stroke-width="4.3" stroke-linejoin="round" stroke-linecap="round"/>
<path d="M227.3 120.4L228.9 114.7L230.8 108.6" fill="none" stroke="#000062" stroke-width="4.0" stroke-linejoin="round" stroke-linecap="round"/>
<path d="M230.8 108.9L232.6 102.8L234.2 97.5" fill="none" stroke="#000059" stroke-width="4.4" stroke-linejoin="round" stroke-linecap="round"/>
<path d="M234.3 97.8L235.6 93.5L236.7 89.8" fill="none" stroke="#000059" stroke-width="4.9" stroke-linejoin="round" stroke-linecap="round"/>
<path d="M236.7 90.1L237.7 86.6L238.9 82.8" fill="none" stroke="#000059" stroke-width="4.5" stroke-linejoin="round" stroke-linecap="round"/>
<path d="M238.9 83.1L240.2 78.6L241.6 73.7" fill="none" stroke="#000062" stroke-width="3.2" stroke-linejoin="round" stroke-linecap="round"/>
<path d="M241.6 74.0L243.0 69.2L244.3 64.8" fill="none" stroke="#000074" stroke-width="2.7" stroke-linejoin="round" stroke-linecap="round"/>
<path d="M244.3 64.9L245.5 61.0L246.8 57.3" fill="none" stroke="#000086" stroke-width="2.6" stroke-linejoin="round" stroke-linecap="round"/>
<path d="M246.8 57.3L247.9 54.0L248.9 51.1" fill="none" stroke="#00128f" stroke-width="2.5" stroke-linejoin="round" stroke-linecap="round"/>
<path d="M248.9 51.1L249.6 48.8L250.2 46.9" fill="none" stroke="#002d8f" stroke-width="2.5" stroke-linejoin="round" stroke-linecap="round"/>
<path d="M250.2 46.9L250.5 45.4L250.6 44.2" fill="none" stroke="#00478f" stroke-width="2.5" stroke-linejoin="round" stroke-linecap="round"/>
<path d="M250.6 44.2L250.5 43.4L250.1 43.0" fill="none" stroke="#00508f" stroke-width="2.5" stroke-linejoin="round" stroke-linecap="round"/>
<path d="M250.1 43.0L249.5 43.0L248.6 43.5" fill="none" stroke="#00508f" stroke-width="2.5" stroke-linejoin="round" stroke-linecap="round"/>
<path d="M248.6 43.5L247.8 44.6L246.7 46.1" fill="none" stroke="#00478f" stroke-width="2.5" stroke-linejoin="round" stroke-linecap="round"/>
<path d="M246.7 46.1L245.4 48.2L243.6 51.1" fill="none" stroke="#00368f" stroke-width="2.5" stroke-linejoin="round" stroke-linecap="round"/>
<path d="M243.6 51.1L240.9 55.4L237.7 60.7" fill="none" stroke="#00128f" stroke-width="2.5" stroke-linejoin="round" stroke-linecap="round"/>
<path d="M237.7 60.6L234.3 66.1L231.3 71.1" fill="none" stroke="#00007d" stroke-width="2.6" stroke-linejoin="round" stroke-linecap="round"/>
<path d="M231.3 70.9L228.8 75.0L226.5 78.7" fill="none" stroke="#00006b" stroke-width="3.6" stroke-linejoin="round" stroke-linecap="round"/>
<path d="M226.5 78.4L224.3 82.1L222.0 86.0" fill="none" stroke="#000062" stroke-width="4.0" stroke-linejoin="round" stroke-linecap="round"/>
<path d="M222.0 85.7L219.5 90.1L217.0 94.8" fill="none" stroke="#000059" stroke-width="4.6" stroke-linejoin="round" stroke-linecap="round"/>
<path d="M216.9 94.5L214.4 99.3L212.0 103.9" fill="none" stroke="#000059" stroke-width="4.7" stroke-linejoin="round" stroke-linecap="round"/>
<path d="M211.9 103.7L209.9 107.8L208.0 111.8" fill="none" stroke="#000062" stroke-width="4.9" stroke-linejoin="round" stroke-linecap="round"/>
<path d="M208.0 111.7L206.0 115.8L203.5 120.4" fill="none" stroke="#00006b" stroke-width="4.6" stroke-linejoin="round" stroke-linecap="round"/>
<path d="M203.4 120.4L200.2 125.9L196.5 132.0" fill="none" stroke="#000074" stroke-width="4.5" stroke-linejoin="round" stroke-linecap="round"/>
<path d="M196.4 131.9L192.5 138.2L188.8 144.2" fill="none" stroke="#00007d" stroke-width="4.4" stroke-linejoin="round" stroke-linecap="round"/>
<path d="M188.7 144.2L185.3 150.0L182.0 155.7" fill="none" stroke="#000086" stroke-width="4.3" stroke-linejoin="round" stroke-linecap="round"/>
<path d="M181.9 155.8L178.7 161.3L175.6 166.5" fill="none" stroke="#00008f" stroke-width="4.3" stroke-linejoin="round" stroke-linecap="round"/>
<path d="M175.6 166.5L172.8 171.2L170.3 175.6" fill="none" stroke="#00098f" stroke-width="4.3" stroke-linejoin="round" stroke-linecap="round"/>
<path d="M170.2 175.6L167.6 179.8L164.5 184.1" fill="none" stroke="#00098f" stroke-width="4.3" stroke-linejoin="round" stroke-linecap="round"/>
<path d="M164.4 184.2L160.8 188.6L156.8 193.0" fill="none" stroke="#00098f" stroke-width="3.9" stroke-linejoin="round" stroke-linecap="round"/>
<path d="M156.8 193.1L152.4 197.6L147.5 202.3" fill="none" stroke="#00008f" stroke-width="3.8" stroke-linejoin="round" stroke-linecap="round"/>
<path d="M147.4 202.4L141.8 207.4L135.6 212.8" fill="none" stroke="#000086" stroke-width="3.8" stroke-linejoin="round" stroke-linecap="round"/>
<path d="M135.7 212.9L129.2 218.2L122.9 223.3" fill="none" stroke="#000074" stroke-width="3.9" stroke-linejoin="round" stroke-linecap="round"/>
<path d="M122.9 223.4L116.8 228.1L110.6 232.7" fill="none" stroke="#00006b" stroke-width="3.7" stroke-linejoin="round" stroke-linecap="round"/>
<path d="M110.8 232.7L104.6 237.2L98.4 241.8" fill="none" stroke="#000059" stroke-width="4.0" stroke-linejoin="round" stroke-linecap="round"/>
<path d="M98.8 241.9L92.5 246.8L86.0 252.0" fill="none" stroke="#000059" stroke-width="4.6" stroke-linejoin="round" stroke-linecap="round"/>
<path d="M86.5 252.0L80.3 257.1L74.7 261.6" fill="none" stroke="#000059" stroke-width="3.7" stroke-linejoin="round" stroke-linecap="round"/>
<path d="M75.0 261.6L70.0 265.5L65.5 268.9" fill="none" stroke="#00006b" stroke-width="3.2" stroke-linejoin="round" stroke-linecap="round"/>
<path d="M65.6 268.9L61.5 272.1L57.9 275.1" fill="none" stroke="#00007d" stroke-width="3.0" stroke-linejoin="round" stroke-linecap="round"/>
<path d="M57.9 275.0L54.8 277.8L52.2 280.4" fill="none" stroke="#00098f" stroke-width="2.9" stroke-linejoin="round" stroke-linecap="round"/>
<path d="M52.2 280.4L50.0 282.8L48.1 285.0" fill="none" stroke="#00248f" stroke-width="2.9" stroke-linejoin="round" stroke-linecap="round"/>
<path d="M48.1 285.0L46.7 287.1L45.5 289.0" fill="none" stroke="#00368f" stroke-width="2.9" stroke-linejoin="round" stroke-linecap="round"/>
<path d="M45.5 289.0L44.8 290.7L44.4 292.3" fill="none" stroke="#003e8f" stroke-width="2.9" stroke-linejoin="round" stroke-linecap="round"/>
<path d="M44.4 292.3L44.5 293.9L44.9 295.4" fill="none" stroke="#003e8f" stroke-width="2.9" stroke-linejoin="round" stroke-linecap="round"/>
<path d="M44.9 295.4L45.7 296.7L46.8 297.7" fill="none" stroke="#00368f" stroke-width="2.9" stroke-linejoin="round" stroke-linecap="round"/>
<path d="M46.8 297.7L48.3 298.3L50.1 298.7" fill="none" stroke="#002d8f" stroke-width="2.9" stroke-linejoin="round" stroke-linecap="round"/>
<path d="M50.1 298.7L52.4 298.7L55.4 298.5" fill="none" stroke="#00128f" stroke-width="2.9" stroke-linejoin="round" stroke-linecap="round"/>
<path d="M55.4 298.5L59.4 298.0L64.3 297.2" fill="none" stroke="#000086" stroke-width="3.0" stroke-linejoin="round" stroke-linecap="round"/>
<path d="M64.2 297.2L69.5 296.3L75.0 295.3" fill="none" stroke="#00006b" stroke-width="3.2" stroke-linejoin="round" stroke-linecap="round"/>
<path d="M74.6 295.3L80.4 294.4L86.6 293.5" fill="none" stroke="#000059" stroke-width="3.8" stroke-linejoin="round" stroke-linecap="round"/>
<path d="M86.1 293.5L92.4 292.6L98.7 291.8" fill="none" stroke="#000050" stroke-width="4.5" stroke-linejoin="round" stroke-linecap="round"/>
<path d="M98.3 291.8L104.6 291.3L111.0 290.8" fill="none" stroke="#000059" stroke-width="3.8" stroke-linejoin="round" stroke-linecap="round"/>
<path d="M110.8 290.8L117.0 290.5L122.8 290.3" fill="none" stroke="#00006b" stroke-width="3.4" stroke-linejoin="round" stroke-linecap="round"/>
<path d="M122.8 290.3L128.3 290.3L133.5 290.4" fill="none" stroke="#00007d" stroke-width="3.3" stroke-linejoin="round" stroke-linecap="round"/>
<path d="M133.5 290.4L138.3 290.6L142.4 291.0" fill="none" stroke="#00008f" stroke-width="3.2" stroke-linejoin="round" stroke-linecap="round"/>
<path d="M142.4 291.0L145.6 291.4L148.1 291.9" fill="none" stroke="#00128f" stroke-width="3.2" stroke-linejoin="round" stroke-linecap="round"/>
<path d="M148.1 291.9L150.2 292.5L152.2 293.5" fill="none" stroke="#001b8f" stroke-width="3.2" stroke-linejoin="round" stroke-linecap="round"/>
<path d="M152.2 293.5L154.1 294.7L155.9 296.3" fill="none" stroke="#00248f" stroke-width="3.1" stroke-linejoin="round" stroke-linecap="round"/>
<path d="M155.9 296.3L157.3 297.9L158.4 299.7" fill="none" stroke="#002d8f" stroke-width="3.1" stroke-linejoin="round" stroke-linecap="round"/>
<path d="M158.4 299.7L159.0 301.3L159.1 303.0" fill="none" stroke="#002d8f" stroke-width="3.1" stroke-linejoin="round" stroke-linecap="round"/>
<path d="M159.1 303.0L159.0 304.8L158.4 307.0" fill="none" stroke="#00368f" stroke-width="3.1" stroke-linejoin="round" stroke-linecap="round"/>
<path d="M158.4 307.0L157.4 309.4L156.0 312.1" fill="none" stroke="#002d8f" stroke-width="3.1" stroke-linejoin="round" stroke-linecap="round"/>
<path d="M156.0 312.1L154.3 314.9L152.2 318.0" fill="none" stroke="#00248f" stroke-width="3.1" stroke-linejoin="round" stroke-linecap="round"/>
<path d="M152.2 318.0L149.6 321.1L146.7 324.5" fill="none" stroke="#001b8f" stroke-width="3.1" stroke-linejoin="round" stroke-linecap="round"/>
<path d="M146.7 324.5L143.4 328.0L139.9 331.7" fill="none" stroke="#00128f" stroke-width="3.2" stroke-linejoin="round" stroke-linecap="round"/>
<path d="M139.9 331.7L136.1 335.6L132.1 339.7" fill="none" stroke="#00008f" stroke-width="3.2" stroke-linejoin="round" stroke-linecap="round"/>
<path d="M132.1 339.7L127.7 344.0L122.7 348.5" fill="none" stroke="#00007d" stroke-width="3.2" stroke-linejoin="round" stroke-linecap="round"/>
<path d="M122.8 348.5L117.2 353.2L110.9 358.2" fill="none" stroke="#00006b" stroke-width="3.4" stroke-linejoin="round" stroke-linecap="round"/>
<path d="M111.1 358.2L104.6 363.2L98.3 368.2" fill="none" stroke="#000059" stroke-width="3.7" stroke-linejoin="round" stroke-linecap="round"/>
<path d="M98.6 368.2L92.3 373.2L85.9 378.3" fill="none" stroke="#000050" stroke-width="4.4" stroke-linejoin="round" stroke-linecap="round"/>
<path d="M86.4 378.3L80.2 383.3L74.6 387.8" fill="none" stroke="#000050" stroke-width="3.9" stroke-linejoin="round" stroke-linecap="round"/>
<path d="M75.0 387.8L70.0 391.9L65.5 395.7" fill="none" stroke="#000062" stroke-width="3.2" stroke-linejoin="round" stroke-linecap="round"/>
<path d="M65.7 395.7L61.6 399.3L57.9 402.6" fill="none" stroke="#000074" stroke-width="3.0" stroke-linejoin="round" stroke-linecap="round"/>
<path d="M57.9 402.6L54.6 405.7L51.6 408.6" fill="none" stroke="#00008f" stroke-width="2.9" stroke-linejoin="round" stroke-linecap="round"/>
<path d="M51.6 408.6L49.0 411.3L46.8 413.7" fill="none" stroke="#001b8f" stroke-width="2.9" stroke-linejoin="round" stroke-linecap="round"/>
<path d="M46.8 413.7L45.1 415.9L43.9 417.7" fill="none" stroke="#00368f" stroke-width="2.9" stroke-linejoin="round" stroke-linecap="round"/>
<path d="M43.9 417.7L43.0 419.4L42.6 421.0" fill="none" stroke="#003e8f" stroke-width="2.9" stroke-linejoin="round" stroke-linecap="round"/>
<path d="M42.6 421.0L42.7 422.6L43.3 424.0" fill="none" stroke="#003e8f" stroke-width="2.9" stroke-linejoin="round" stroke-linecap="round"/>
<path d="M43.3 424.0L44.3 425.2L45.6 426.0" fill="none" stroke="#00368f" stroke-width="2.9" stroke-linejoin="round" stroke-linecap="round"/>
<path d="M45.6 426.0L47.4 426.2L49.5 425.9" fill="none" stroke="#00248f" stroke-width="2.9" stroke-linejoin="round" stroke-linecap="round"/>
<path d="M49.5 425.9L52.1 425.4L55.4 424.8" fill="none" stroke="#00098f" stroke-width="2.9" stroke-linejoin="round" stroke-linecap="round"/>
<path d="M55.4 424.8L59.5 424.2L64.3 423.4" fill="none" stroke="#00007d" stroke-width="3.0" stroke-linejoin="round" stroke-linecap="round"/>
<path d="M64.2 423.4L69.5 422.5L75.0 421.6" fill="none" stroke="#000062" stroke-width="3.2" stroke-linejoin="round" stroke-linecap="round"/>
<path d="M74.6 421.6L80.4 420.6L86.6 419.5" fill="none" stroke="#000050" stroke-width="4.0" stroke-linejoin="round" stroke-linecap="round"/>
<path d="M86.0 419.5L92.4 418.4L98.6 417.4" fill="none" stroke="#000050" stroke-width="4.4" stroke-linejoin="round" stroke-linecap="round"/>
<path d="M98.3 417.4L104.6 416.5L111.1 415.7" fill="none" stroke="#000059" stroke-width="3.7" stroke-linejoin="round" stroke-linecap="round"/>
<path d="M110.9 415.7L117.1 415.0L122.8 414.4" fill="none" stroke="#00006b" stroke-width="3.4" stroke-linejoin="round" stroke-linecap="round"/>
<path d="M122.7 414.4L127.7 414.0L132.2 413.7" fill="none" stroke="#00007d" stroke-width="3.2" stroke-linejoin="round" stroke-linecap="round"/>
<path d="M132.1 413.7L136.2 413.5L139.9 413.7" fill="none" stroke="#00008f" stroke-width="3.2" stroke-linejoin="round" stroke-linecap="round"/>
<path d="M139.9 413.7L143.2 414.1L146.1 414.8" fill="none" stroke="#00128f" stroke-width="3.1" stroke-linejoin="round" stroke-linecap="round"/>
<path d="M146.1 414.8L148.7 415.8L151.0 416.9" fill="none" stroke="#001b8f" stroke-width="3.1" stroke-linejoin="round" stroke-linecap="round"/>
<path d="M151.0 416.9L153.0 418.2L154.8 419.7" fill="none" stroke="#00248f" stroke-width="3.1" stroke-linejoin="round" stroke-linecap="round"/>
<path d="M154.8 419.7L156.2 421.5L157.1 423.5" fill="none" stroke="#002d8f" stroke-width="3.1" stroke-linejoin="round" stroke-linecap="round"/>
<path d="M157.0 423.5L157.4 425.9L157.4 428.7" fill="none" stroke="#00368f" stroke-width="3.1" stroke-linejoin="round" stroke-linecap="round"/>
<path d="M157.4 428.7L156.8 431.6L155.8 434.6" fill="none" stroke="#00368f" stroke-width="3.1" stroke-linejoin="round" stroke-linecap="round"/>
<path d="M155.9 434.6L154.4 437.6L152.4 440.6" fill="none" stroke="#002d8f" stroke-width="3.1" stroke-linejoin="round" stroke-linecap="round"/>
<path d="M152.4 440.6L150.0 443.8L147.3 447.0" fill="none" stroke="#00248f" stroke-width="3.1" stroke-linejoin="round" stroke-linecap="round"/>
<path d="M147.3 447.0L144.0 450.3L140.3 453.7" fill="none" stroke="#00128f" stroke-width="3.1" stroke-linejoin="round" stroke-linecap="round"/>
<path d="M140.3 453.7L136.4 457.1L132.5 460.5" fill="none" stroke="#00008f" stroke-width="3.2" stroke-linejoin="round" stroke-linecap="round"/>
<path d="M132.5 460.5L128.9 463.6L125.3 466.6" fill="none" stroke="#00007d" stroke-width="3.2" stroke-linejoin="round" stroke-linecap="round"/>
<path d="M125.4 466.6L121.4 469.8L116.6 473.7" fill="none" stroke="#000074" stroke-width="3.3" stroke-linejoin="round" stroke-linecap="round"/>
<path d="M116.7 473.7L110.6 478.4L103.5 483.7" fill="none" stroke="#000062" stroke-width="3.5" stroke-linejoin="round" stroke-linecap="round"/>
<path d="M103.9 483.7L96.5 489.4L89.3 494.9" fill="none" stroke="#000050" stroke-width="4.1" stroke-linejoin="round" stroke-linecap="round"/>
<path d="M89.9 494.9L82.7 500.4L75.5 505.9" fill="none" stroke="#000050" stroke-width="4.2" stroke-linejoin="round" stroke-linecap="round"/>
<path d="M76.0 505.9L69.0 511.4L62.7 517.0" fill="none" stroke="#000062" stroke-width="3.2" stroke-linejoin="round" stroke-linecap="round"/>
<path d="M62.8 517.0L57.1 523.0L51.9 529.4" fill="none" stroke="#000086" stroke-width="2.9" stroke-linejoin="round" stroke-linecap="round"/>
<path d="M51.9 529.4L47.5 535.1L44.2 539.2" fill="none" stroke="#00248f" stroke-width="2.9" stroke-linejoin="round" stroke-linecap="round"/>
<path d="M44.2 539.2L42.7 541.1L42.5 541.4" fill="none" stroke="#003e8f" stroke-width="2.9" stroke-linejoin="round" stroke-linecap="round"/>
<path d="M42.5 541.4L42.9 541.0L43.1 540.8" fill="none" stroke="#003e8f" stroke-width="2.9" stroke-linejoin="round" stroke-linecap="round"/>
<path d="M102.0 541.8C104.2 541.3 110.0 539.4 115.0 538.6C120.0 537.8 127.0 536.9 132.0 536.8C137.0 536.7 141.6 537.4 145.0 538.0C148.4 538.6 151.2 540.2 152.5 540.6" fill="none" stroke="#02021e" stroke-width="3.8" stroke-linecap="butt"/>
<path d="M102.0 541.8C104.2 541.3 110.0 539.4 115.0 538.6C120.0 537.8 127.0 536.9 132.0 536.8C137.0 536.7 141.6 537.4 145.0 538.0C148.4 538.6 151.2 540.2 152.5 540.6" fill="none" stroke="#000050" stroke-width="2.2" stroke-linecap="butt" transform="translate(0,0.6)"/>
</svg>
<div class="abs" style="left:0;top:0;width:901px;height:650px;pointer-events:none"><div class="abs tk" style="left:280px;width:49.5px;top:60.5px;text-align:right">0.4</div><div class="abs tk" style="left:280px;width:49.5px;top:112.0px;text-align:right">0.6</div><div class="abs tk" style="left:280px;width:49.5px;top:163.5px;text-align:right">0.8</div><div class="abs tk" style="left:280px;width:49.5px;top:215.1px;text-align:right">1</div><div class="abs tk" style="left:280px;width:49.5px;top:266.6px;text-align:right">1.2</div><div class="abs tk" style="left:280px;width:49.5px;top:318.1px;text-align:right">1.4</div><div class="abs tk" style="left:280px;width:49.5px;top:369.6px;text-align:right">1.6</div><div class="abs tk" style="left:280px;width:49.5px;top:421.2px;text-align:right">1.8</div><div class="abs tk" style="left:280px;width:49.5px;top:472.7px;text-align:right">2</div><div class="abs tk" style="left:280px;width:49.5px;top:524.2px;text-align:right">2.2</div><div class="abs tk" style="left:280px;width:49.5px;top:575.7px;text-align:right">2.4</div></div>
<div class="abs" style="left:3px;top:52px;width:891px;height:13px;overflow:hidden"><div class="abs xt" style="left:-3px;top:-5px;width:901px;height:20px"><div class="abs tk" style="left:315.0px;width:40px;top:0;text-align:center">0.4</div><div class="abs tk" style="left:366.6px;width:40px;top:0;text-align:center">0.6</div><div class="abs tk" style="left:418.2px;width:40px;top:0;text-align:center">0.8</div><div class="abs tk" style="left:469.9px;width:40px;top:0;text-align:center">1</div><div class="abs tk" style="left:521.5px;width:40px;top:0;text-align:center">1.2</div><div class="abs tk" style="left:573.1px;width:40px;top:0;text-align:center">1.4</div><div class="abs tk" style="left:624.7px;width:40px;top:0;text-align:center">1.6</div><div class="abs tk" style="left:676.3px;width:40px;top:0;text-align:center">1.8</div><div class="abs tk" style="left:728.0px;width:40px;top:0;text-align:center">2</div><div class="abs tk" style="left:779.6px;width:40px;top:0;text-align:center">2.2</div><div class="abs tk" style="left:831.2px;width:40px;top:0;text-align:center">2.4</div></div></div>
<div class="abs" style="left:297px;top:336px;width:0;height:0"><div class="abs" style="transform:translate(-50%,-50%) rotate(-90deg);white-space:nowrap;font-family:'Liberation Serif',serif;font-size:16px;color:#3a3a3a;line-height:18px">B-C bond distance (Å)</div></div>
</body></html>
